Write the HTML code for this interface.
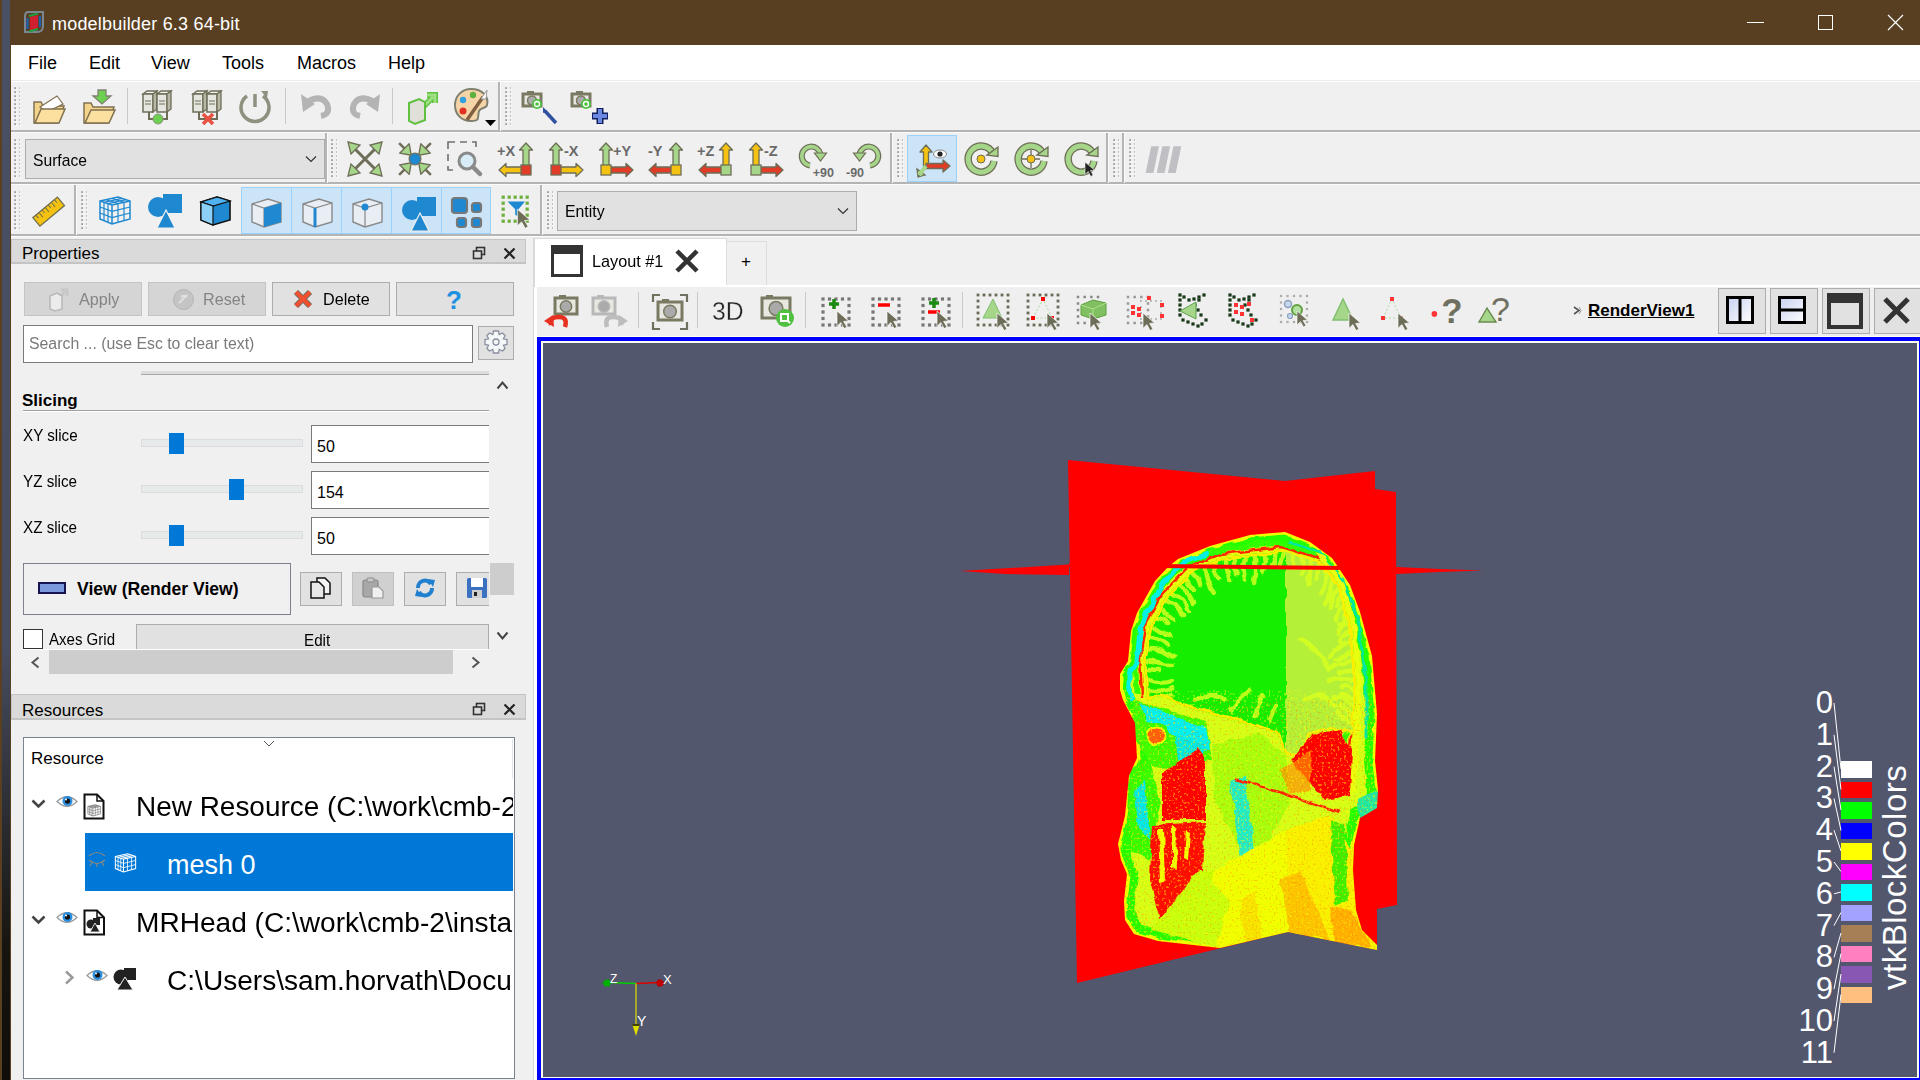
<!DOCTYPE html>
<html><head><meta charset="utf-8">
<style>
*{margin:0;padding:0;box-sizing:border-box}
html,body{width:1920px;height:1080px;overflow:hidden;background:#4b5064;font-family:"Liberation Sans",sans-serif;color:#000}
.a{position:absolute;overflow:visible}
.t{position:absolute;white-space:nowrap;line-height:1}
</style></head><body>

<div class="a" style="left:0px;top:0px;width:2px;height:1080px;background:#5a3f20"></div>
<div class="a" style="left:2px;top:0px;width:8px;height:1080px;background:linear-gradient(#4a5063,#474d60 60%,#15140f 88%,#0e0d0a)"></div>
<div class="a" style="left:10px;top:0px;width:1px;height:1080px;background:#5a3f20"></div>
<div class="a" style="left:11px;top:0px;width:1909px;height:45px;background:#583f21"></div>
<svg class="a" style="left:23px;top:10px" width="22" height="24" viewBox="0 0 22 24"><path d="M4 2 H20 V16 Q20 22 14 22 H2 V6 Q2 2 6 2Z" fill="none" stroke="#7a8790" stroke-width="2"/><path d="M7 7 L15 5 V19 L7 21Z" fill="#d02030"/><path d="M6 6 L15 3.5" stroke="#20a040" stroke-width="2"/><path d="M6 21.5 L15 19" stroke="#20a040" stroke-width="2"/><path d="M4.5 8 V19" stroke="#2060b0" stroke-width="2.2"/><path d="M17 6 V17" stroke="#2060b0" stroke-width="2.2"/></svg>
<div class="t" style="left:52px;top:15px;font-size:18px;color:#fff;letter-spacing:0.2px">modelbuilder 6.3 64-bit</div>
<div class="a" style="left:1747px;top:22px;width:17px;height:1px;background:#fff"></div>
<div class="a" style="left:1818px;top:15px;width:15px;height:15px;border:1px solid #fff"></div>
<svg class="a" style="left:1887px;top:14px" width="17" height="17" viewBox="0 0 17 17"><path d="M1 1 L16 16 M16 1 L1 16" stroke="#fff" stroke-width="1.2"/></svg>
<div class="a" style="left:11px;top:45px;width:1909px;height:35px;background:#fff"></div>
<div class="t" style="left:28px;top:54px;font-size:18px;">File</div>
<div class="t" style="left:89px;top:54px;font-size:18px;">Edit</div>
<div class="t" style="left:151px;top:54px;font-size:18px;">View</div>
<div class="t" style="left:222px;top:54px;font-size:18px;">Tools</div>
<div class="t" style="left:297px;top:54px;font-size:18px;">Macros</div>
<div class="t" style="left:388px;top:54px;font-size:18px;">Help</div>
<div class="a" style="left:11px;top:80px;width:1909px;height:1px;background:#ebebeb"></div>
<div class="a" style="left:11px;top:81px;width:1909px;height:1px;background:#fff"></div>
<div class="a" style="left:11px;top:82px;width:1909px;height:998px;background:#f0f0f0"></div>
<div class="a" style="left:11px;top:130px;width:1909px;height:2px;background:#b4b4b4"></div>
<div class="a" style="left:11px;top:132px;width:1909px;height:1px;background:#fbfbfb"></div>
<div class="a" style="left:11px;top:182px;width:1909px;height:2px;background:#b4b4b4"></div>
<div class="a" style="left:11px;top:184px;width:1909px;height:1px;background:#fbfbfb"></div>
<div class="a" style="left:11px;top:234px;width:1909px;height:2px;background:#b4b4b4"></div>
<div class="a" style="left:11px;top:236px;width:1909px;height:1px;background:#fbfbfb"></div>
<svg class="a" style="left:14px;top:87px" width="8" height="41" viewBox="0 0 8 41"><rect x="0" y="0" width="2" height="2" fill="#b4b4b4"/><rect x="1" y="1" width="1" height="1" fill="#999"/><rect x="2" y="2" width="1" height="1" fill="#fff"/><rect x="5" y="0" width="1" height="2" fill="#c4c4c4"/><rect x="6" y="2" width="1" height="1" fill="#fff"/><rect x="0" y="4" width="2" height="2" fill="#b4b4b4"/><rect x="1" y="5" width="1" height="1" fill="#999"/><rect x="2" y="6" width="1" height="1" fill="#fff"/><rect x="5" y="4" width="1" height="2" fill="#c4c4c4"/><rect x="6" y="6" width="1" height="1" fill="#fff"/><rect x="0" y="8" width="2" height="2" fill="#b4b4b4"/><rect x="1" y="9" width="1" height="1" fill="#999"/><rect x="2" y="10" width="1" height="1" fill="#fff"/><rect x="5" y="8" width="1" height="2" fill="#c4c4c4"/><rect x="6" y="10" width="1" height="1" fill="#fff"/><rect x="0" y="12" width="2" height="2" fill="#b4b4b4"/><rect x="1" y="13" width="1" height="1" fill="#999"/><rect x="2" y="14" width="1" height="1" fill="#fff"/><rect x="5" y="12" width="1" height="2" fill="#c4c4c4"/><rect x="6" y="14" width="1" height="1" fill="#fff"/><rect x="0" y="16" width="2" height="2" fill="#b4b4b4"/><rect x="1" y="17" width="1" height="1" fill="#999"/><rect x="2" y="18" width="1" height="1" fill="#fff"/><rect x="5" y="16" width="1" height="2" fill="#c4c4c4"/><rect x="6" y="18" width="1" height="1" fill="#fff"/><rect x="0" y="20" width="2" height="2" fill="#b4b4b4"/><rect x="1" y="21" width="1" height="1" fill="#999"/><rect x="2" y="22" width="1" height="1" fill="#fff"/><rect x="5" y="20" width="1" height="2" fill="#c4c4c4"/><rect x="6" y="22" width="1" height="1" fill="#fff"/><rect x="0" y="24" width="2" height="2" fill="#b4b4b4"/><rect x="1" y="25" width="1" height="1" fill="#999"/><rect x="2" y="26" width="1" height="1" fill="#fff"/><rect x="5" y="24" width="1" height="2" fill="#c4c4c4"/><rect x="6" y="26" width="1" height="1" fill="#fff"/><rect x="0" y="28" width="2" height="2" fill="#b4b4b4"/><rect x="1" y="29" width="1" height="1" fill="#999"/><rect x="2" y="30" width="1" height="1" fill="#fff"/><rect x="5" y="28" width="1" height="2" fill="#c4c4c4"/><rect x="6" y="30" width="1" height="1" fill="#fff"/><rect x="0" y="32" width="2" height="2" fill="#b4b4b4"/><rect x="1" y="33" width="1" height="1" fill="#999"/><rect x="2" y="34" width="1" height="1" fill="#fff"/><rect x="5" y="32" width="1" height="2" fill="#c4c4c4"/><rect x="6" y="34" width="1" height="1" fill="#fff"/><rect x="0" y="36" width="2" height="2" fill="#b4b4b4"/><rect x="1" y="37" width="1" height="1" fill="#999"/><rect x="2" y="38" width="1" height="1" fill="#fff"/><rect x="5" y="36" width="1" height="2" fill="#c4c4c4"/><rect x="6" y="38" width="1" height="1" fill="#fff"/></svg>
<div class="a" style="left:498px;top:82px;width:2px;height:49px;background:#b4b4b4"></div>
<div class="a" style="left:500px;top:82px;width:1px;height:49px;background:#fbfbfb"></div>
<svg class="a" style="left:505px;top:87px" width="8" height="41" viewBox="0 0 8 41"><rect x="0" y="0" width="2" height="2" fill="#b4b4b4"/><rect x="1" y="1" width="1" height="1" fill="#999"/><rect x="2" y="2" width="1" height="1" fill="#fff"/><rect x="5" y="0" width="1" height="2" fill="#c4c4c4"/><rect x="6" y="2" width="1" height="1" fill="#fff"/><rect x="0" y="4" width="2" height="2" fill="#b4b4b4"/><rect x="1" y="5" width="1" height="1" fill="#999"/><rect x="2" y="6" width="1" height="1" fill="#fff"/><rect x="5" y="4" width="1" height="2" fill="#c4c4c4"/><rect x="6" y="6" width="1" height="1" fill="#fff"/><rect x="0" y="8" width="2" height="2" fill="#b4b4b4"/><rect x="1" y="9" width="1" height="1" fill="#999"/><rect x="2" y="10" width="1" height="1" fill="#fff"/><rect x="5" y="8" width="1" height="2" fill="#c4c4c4"/><rect x="6" y="10" width="1" height="1" fill="#fff"/><rect x="0" y="12" width="2" height="2" fill="#b4b4b4"/><rect x="1" y="13" width="1" height="1" fill="#999"/><rect x="2" y="14" width="1" height="1" fill="#fff"/><rect x="5" y="12" width="1" height="2" fill="#c4c4c4"/><rect x="6" y="14" width="1" height="1" fill="#fff"/><rect x="0" y="16" width="2" height="2" fill="#b4b4b4"/><rect x="1" y="17" width="1" height="1" fill="#999"/><rect x="2" y="18" width="1" height="1" fill="#fff"/><rect x="5" y="16" width="1" height="2" fill="#c4c4c4"/><rect x="6" y="18" width="1" height="1" fill="#fff"/><rect x="0" y="20" width="2" height="2" fill="#b4b4b4"/><rect x="1" y="21" width="1" height="1" fill="#999"/><rect x="2" y="22" width="1" height="1" fill="#fff"/><rect x="5" y="20" width="1" height="2" fill="#c4c4c4"/><rect x="6" y="22" width="1" height="1" fill="#fff"/><rect x="0" y="24" width="2" height="2" fill="#b4b4b4"/><rect x="1" y="25" width="1" height="1" fill="#999"/><rect x="2" y="26" width="1" height="1" fill="#fff"/><rect x="5" y="24" width="1" height="2" fill="#c4c4c4"/><rect x="6" y="26" width="1" height="1" fill="#fff"/><rect x="0" y="28" width="2" height="2" fill="#b4b4b4"/><rect x="1" y="29" width="1" height="1" fill="#999"/><rect x="2" y="30" width="1" height="1" fill="#fff"/><rect x="5" y="28" width="1" height="2" fill="#c4c4c4"/><rect x="6" y="30" width="1" height="1" fill="#fff"/><rect x="0" y="32" width="2" height="2" fill="#b4b4b4"/><rect x="1" y="33" width="1" height="1" fill="#999"/><rect x="2" y="34" width="1" height="1" fill="#fff"/><rect x="5" y="32" width="1" height="2" fill="#c4c4c4"/><rect x="6" y="34" width="1" height="1" fill="#fff"/><rect x="0" y="36" width="2" height="2" fill="#b4b4b4"/><rect x="1" y="37" width="1" height="1" fill="#999"/><rect x="2" y="38" width="1" height="1" fill="#fff"/><rect x="5" y="36" width="1" height="2" fill="#c4c4c4"/><rect x="6" y="38" width="1" height="1" fill="#fff"/></svg>
<svg class="a" style="left:14px;top:139px" width="8" height="42" viewBox="0 0 8 42"><rect x="0" y="0" width="2" height="2" fill="#b4b4b4"/><rect x="1" y="1" width="1" height="1" fill="#999"/><rect x="2" y="2" width="1" height="1" fill="#fff"/><rect x="5" y="0" width="1" height="2" fill="#c4c4c4"/><rect x="6" y="2" width="1" height="1" fill="#fff"/><rect x="0" y="4" width="2" height="2" fill="#b4b4b4"/><rect x="1" y="5" width="1" height="1" fill="#999"/><rect x="2" y="6" width="1" height="1" fill="#fff"/><rect x="5" y="4" width="1" height="2" fill="#c4c4c4"/><rect x="6" y="6" width="1" height="1" fill="#fff"/><rect x="0" y="8" width="2" height="2" fill="#b4b4b4"/><rect x="1" y="9" width="1" height="1" fill="#999"/><rect x="2" y="10" width="1" height="1" fill="#fff"/><rect x="5" y="8" width="1" height="2" fill="#c4c4c4"/><rect x="6" y="10" width="1" height="1" fill="#fff"/><rect x="0" y="12" width="2" height="2" fill="#b4b4b4"/><rect x="1" y="13" width="1" height="1" fill="#999"/><rect x="2" y="14" width="1" height="1" fill="#fff"/><rect x="5" y="12" width="1" height="2" fill="#c4c4c4"/><rect x="6" y="14" width="1" height="1" fill="#fff"/><rect x="0" y="16" width="2" height="2" fill="#b4b4b4"/><rect x="1" y="17" width="1" height="1" fill="#999"/><rect x="2" y="18" width="1" height="1" fill="#fff"/><rect x="5" y="16" width="1" height="2" fill="#c4c4c4"/><rect x="6" y="18" width="1" height="1" fill="#fff"/><rect x="0" y="20" width="2" height="2" fill="#b4b4b4"/><rect x="1" y="21" width="1" height="1" fill="#999"/><rect x="2" y="22" width="1" height="1" fill="#fff"/><rect x="5" y="20" width="1" height="2" fill="#c4c4c4"/><rect x="6" y="22" width="1" height="1" fill="#fff"/><rect x="0" y="24" width="2" height="2" fill="#b4b4b4"/><rect x="1" y="25" width="1" height="1" fill="#999"/><rect x="2" y="26" width="1" height="1" fill="#fff"/><rect x="5" y="24" width="1" height="2" fill="#c4c4c4"/><rect x="6" y="26" width="1" height="1" fill="#fff"/><rect x="0" y="28" width="2" height="2" fill="#b4b4b4"/><rect x="1" y="29" width="1" height="1" fill="#999"/><rect x="2" y="30" width="1" height="1" fill="#fff"/><rect x="5" y="28" width="1" height="2" fill="#c4c4c4"/><rect x="6" y="30" width="1" height="1" fill="#fff"/><rect x="0" y="32" width="2" height="2" fill="#b4b4b4"/><rect x="1" y="33" width="1" height="1" fill="#999"/><rect x="2" y="34" width="1" height="1" fill="#fff"/><rect x="5" y="32" width="1" height="2" fill="#c4c4c4"/><rect x="6" y="34" width="1" height="1" fill="#fff"/><rect x="0" y="36" width="2" height="2" fill="#b4b4b4"/><rect x="1" y="37" width="1" height="1" fill="#999"/><rect x="2" y="38" width="1" height="1" fill="#fff"/><rect x="5" y="36" width="1" height="2" fill="#c4c4c4"/><rect x="6" y="38" width="1" height="1" fill="#fff"/></svg>
<div class="a" style="left:325px;top:133px;width:2px;height:50px;background:#b4b4b4"></div>
<div class="a" style="left:327px;top:133px;width:1px;height:50px;background:#fbfbfb"></div>
<svg class="a" style="left:331px;top:139px" width="8" height="42" viewBox="0 0 8 42"><rect x="0" y="0" width="2" height="2" fill="#b4b4b4"/><rect x="1" y="1" width="1" height="1" fill="#999"/><rect x="2" y="2" width="1" height="1" fill="#fff"/><rect x="5" y="0" width="1" height="2" fill="#c4c4c4"/><rect x="6" y="2" width="1" height="1" fill="#fff"/><rect x="0" y="4" width="2" height="2" fill="#b4b4b4"/><rect x="1" y="5" width="1" height="1" fill="#999"/><rect x="2" y="6" width="1" height="1" fill="#fff"/><rect x="5" y="4" width="1" height="2" fill="#c4c4c4"/><rect x="6" y="6" width="1" height="1" fill="#fff"/><rect x="0" y="8" width="2" height="2" fill="#b4b4b4"/><rect x="1" y="9" width="1" height="1" fill="#999"/><rect x="2" y="10" width="1" height="1" fill="#fff"/><rect x="5" y="8" width="1" height="2" fill="#c4c4c4"/><rect x="6" y="10" width="1" height="1" fill="#fff"/><rect x="0" y="12" width="2" height="2" fill="#b4b4b4"/><rect x="1" y="13" width="1" height="1" fill="#999"/><rect x="2" y="14" width="1" height="1" fill="#fff"/><rect x="5" y="12" width="1" height="2" fill="#c4c4c4"/><rect x="6" y="14" width="1" height="1" fill="#fff"/><rect x="0" y="16" width="2" height="2" fill="#b4b4b4"/><rect x="1" y="17" width="1" height="1" fill="#999"/><rect x="2" y="18" width="1" height="1" fill="#fff"/><rect x="5" y="16" width="1" height="2" fill="#c4c4c4"/><rect x="6" y="18" width="1" height="1" fill="#fff"/><rect x="0" y="20" width="2" height="2" fill="#b4b4b4"/><rect x="1" y="21" width="1" height="1" fill="#999"/><rect x="2" y="22" width="1" height="1" fill="#fff"/><rect x="5" y="20" width="1" height="2" fill="#c4c4c4"/><rect x="6" y="22" width="1" height="1" fill="#fff"/><rect x="0" y="24" width="2" height="2" fill="#b4b4b4"/><rect x="1" y="25" width="1" height="1" fill="#999"/><rect x="2" y="26" width="1" height="1" fill="#fff"/><rect x="5" y="24" width="1" height="2" fill="#c4c4c4"/><rect x="6" y="26" width="1" height="1" fill="#fff"/><rect x="0" y="28" width="2" height="2" fill="#b4b4b4"/><rect x="1" y="29" width="1" height="1" fill="#999"/><rect x="2" y="30" width="1" height="1" fill="#fff"/><rect x="5" y="28" width="1" height="2" fill="#c4c4c4"/><rect x="6" y="30" width="1" height="1" fill="#fff"/><rect x="0" y="32" width="2" height="2" fill="#b4b4b4"/><rect x="1" y="33" width="1" height="1" fill="#999"/><rect x="2" y="34" width="1" height="1" fill="#fff"/><rect x="5" y="32" width="1" height="2" fill="#c4c4c4"/><rect x="6" y="34" width="1" height="1" fill="#fff"/><rect x="0" y="36" width="2" height="2" fill="#b4b4b4"/><rect x="1" y="37" width="1" height="1" fill="#999"/><rect x="2" y="38" width="1" height="1" fill="#fff"/><rect x="5" y="36" width="1" height="2" fill="#c4c4c4"/><rect x="6" y="38" width="1" height="1" fill="#fff"/></svg>
<div class="a" style="left:890px;top:133px;width:2px;height:50px;background:#b4b4b4"></div>
<div class="a" style="left:892px;top:133px;width:1px;height:50px;background:#fbfbfb"></div>
<svg class="a" style="left:897px;top:139px" width="8" height="42" viewBox="0 0 8 42"><rect x="0" y="0" width="2" height="2" fill="#b4b4b4"/><rect x="1" y="1" width="1" height="1" fill="#999"/><rect x="2" y="2" width="1" height="1" fill="#fff"/><rect x="5" y="0" width="1" height="2" fill="#c4c4c4"/><rect x="6" y="2" width="1" height="1" fill="#fff"/><rect x="0" y="4" width="2" height="2" fill="#b4b4b4"/><rect x="1" y="5" width="1" height="1" fill="#999"/><rect x="2" y="6" width="1" height="1" fill="#fff"/><rect x="5" y="4" width="1" height="2" fill="#c4c4c4"/><rect x="6" y="6" width="1" height="1" fill="#fff"/><rect x="0" y="8" width="2" height="2" fill="#b4b4b4"/><rect x="1" y="9" width="1" height="1" fill="#999"/><rect x="2" y="10" width="1" height="1" fill="#fff"/><rect x="5" y="8" width="1" height="2" fill="#c4c4c4"/><rect x="6" y="10" width="1" height="1" fill="#fff"/><rect x="0" y="12" width="2" height="2" fill="#b4b4b4"/><rect x="1" y="13" width="1" height="1" fill="#999"/><rect x="2" y="14" width="1" height="1" fill="#fff"/><rect x="5" y="12" width="1" height="2" fill="#c4c4c4"/><rect x="6" y="14" width="1" height="1" fill="#fff"/><rect x="0" y="16" width="2" height="2" fill="#b4b4b4"/><rect x="1" y="17" width="1" height="1" fill="#999"/><rect x="2" y="18" width="1" height="1" fill="#fff"/><rect x="5" y="16" width="1" height="2" fill="#c4c4c4"/><rect x="6" y="18" width="1" height="1" fill="#fff"/><rect x="0" y="20" width="2" height="2" fill="#b4b4b4"/><rect x="1" y="21" width="1" height="1" fill="#999"/><rect x="2" y="22" width="1" height="1" fill="#fff"/><rect x="5" y="20" width="1" height="2" fill="#c4c4c4"/><rect x="6" y="22" width="1" height="1" fill="#fff"/><rect x="0" y="24" width="2" height="2" fill="#b4b4b4"/><rect x="1" y="25" width="1" height="1" fill="#999"/><rect x="2" y="26" width="1" height="1" fill="#fff"/><rect x="5" y="24" width="1" height="2" fill="#c4c4c4"/><rect x="6" y="26" width="1" height="1" fill="#fff"/><rect x="0" y="28" width="2" height="2" fill="#b4b4b4"/><rect x="1" y="29" width="1" height="1" fill="#999"/><rect x="2" y="30" width="1" height="1" fill="#fff"/><rect x="5" y="28" width="1" height="2" fill="#c4c4c4"/><rect x="6" y="30" width="1" height="1" fill="#fff"/><rect x="0" y="32" width="2" height="2" fill="#b4b4b4"/><rect x="1" y="33" width="1" height="1" fill="#999"/><rect x="2" y="34" width="1" height="1" fill="#fff"/><rect x="5" y="32" width="1" height="2" fill="#c4c4c4"/><rect x="6" y="34" width="1" height="1" fill="#fff"/><rect x="0" y="36" width="2" height="2" fill="#b4b4b4"/><rect x="1" y="37" width="1" height="1" fill="#999"/><rect x="2" y="38" width="1" height="1" fill="#fff"/><rect x="5" y="36" width="1" height="2" fill="#c4c4c4"/><rect x="6" y="38" width="1" height="1" fill="#fff"/></svg>
<div class="a" style="left:1106px;top:133px;width:2px;height:50px;background:#b4b4b4"></div>
<div class="a" style="left:1108px;top:133px;width:1px;height:50px;background:#fbfbfb"></div>
<svg class="a" style="left:1113px;top:139px" width="8" height="42" viewBox="0 0 8 42"><rect x="0" y="0" width="2" height="2" fill="#b4b4b4"/><rect x="1" y="1" width="1" height="1" fill="#999"/><rect x="2" y="2" width="1" height="1" fill="#fff"/><rect x="5" y="0" width="1" height="2" fill="#c4c4c4"/><rect x="6" y="2" width="1" height="1" fill="#fff"/><rect x="0" y="4" width="2" height="2" fill="#b4b4b4"/><rect x="1" y="5" width="1" height="1" fill="#999"/><rect x="2" y="6" width="1" height="1" fill="#fff"/><rect x="5" y="4" width="1" height="2" fill="#c4c4c4"/><rect x="6" y="6" width="1" height="1" fill="#fff"/><rect x="0" y="8" width="2" height="2" fill="#b4b4b4"/><rect x="1" y="9" width="1" height="1" fill="#999"/><rect x="2" y="10" width="1" height="1" fill="#fff"/><rect x="5" y="8" width="1" height="2" fill="#c4c4c4"/><rect x="6" y="10" width="1" height="1" fill="#fff"/><rect x="0" y="12" width="2" height="2" fill="#b4b4b4"/><rect x="1" y="13" width="1" height="1" fill="#999"/><rect x="2" y="14" width="1" height="1" fill="#fff"/><rect x="5" y="12" width="1" height="2" fill="#c4c4c4"/><rect x="6" y="14" width="1" height="1" fill="#fff"/><rect x="0" y="16" width="2" height="2" fill="#b4b4b4"/><rect x="1" y="17" width="1" height="1" fill="#999"/><rect x="2" y="18" width="1" height="1" fill="#fff"/><rect x="5" y="16" width="1" height="2" fill="#c4c4c4"/><rect x="6" y="18" width="1" height="1" fill="#fff"/><rect x="0" y="20" width="2" height="2" fill="#b4b4b4"/><rect x="1" y="21" width="1" height="1" fill="#999"/><rect x="2" y="22" width="1" height="1" fill="#fff"/><rect x="5" y="20" width="1" height="2" fill="#c4c4c4"/><rect x="6" y="22" width="1" height="1" fill="#fff"/><rect x="0" y="24" width="2" height="2" fill="#b4b4b4"/><rect x="1" y="25" width="1" height="1" fill="#999"/><rect x="2" y="26" width="1" height="1" fill="#fff"/><rect x="5" y="24" width="1" height="2" fill="#c4c4c4"/><rect x="6" y="26" width="1" height="1" fill="#fff"/><rect x="0" y="28" width="2" height="2" fill="#b4b4b4"/><rect x="1" y="29" width="1" height="1" fill="#999"/><rect x="2" y="30" width="1" height="1" fill="#fff"/><rect x="5" y="28" width="1" height="2" fill="#c4c4c4"/><rect x="6" y="30" width="1" height="1" fill="#fff"/><rect x="0" y="32" width="2" height="2" fill="#b4b4b4"/><rect x="1" y="33" width="1" height="1" fill="#999"/><rect x="2" y="34" width="1" height="1" fill="#fff"/><rect x="5" y="32" width="1" height="2" fill="#c4c4c4"/><rect x="6" y="34" width="1" height="1" fill="#fff"/><rect x="0" y="36" width="2" height="2" fill="#b4b4b4"/><rect x="1" y="37" width="1" height="1" fill="#999"/><rect x="2" y="38" width="1" height="1" fill="#fff"/><rect x="5" y="36" width="1" height="2" fill="#c4c4c4"/><rect x="6" y="38" width="1" height="1" fill="#fff"/></svg>
<div class="a" style="left:1122px;top:133px;width:2px;height:50px;background:#b4b4b4"></div>
<div class="a" style="left:1124px;top:133px;width:1px;height:50px;background:#fbfbfb"></div>
<svg class="a" style="left:1129px;top:139px" width="8" height="42" viewBox="0 0 8 42"><rect x="0" y="0" width="2" height="2" fill="#b4b4b4"/><rect x="1" y="1" width="1" height="1" fill="#999"/><rect x="2" y="2" width="1" height="1" fill="#fff"/><rect x="5" y="0" width="1" height="2" fill="#c4c4c4"/><rect x="6" y="2" width="1" height="1" fill="#fff"/><rect x="0" y="4" width="2" height="2" fill="#b4b4b4"/><rect x="1" y="5" width="1" height="1" fill="#999"/><rect x="2" y="6" width="1" height="1" fill="#fff"/><rect x="5" y="4" width="1" height="2" fill="#c4c4c4"/><rect x="6" y="6" width="1" height="1" fill="#fff"/><rect x="0" y="8" width="2" height="2" fill="#b4b4b4"/><rect x="1" y="9" width="1" height="1" fill="#999"/><rect x="2" y="10" width="1" height="1" fill="#fff"/><rect x="5" y="8" width="1" height="2" fill="#c4c4c4"/><rect x="6" y="10" width="1" height="1" fill="#fff"/><rect x="0" y="12" width="2" height="2" fill="#b4b4b4"/><rect x="1" y="13" width="1" height="1" fill="#999"/><rect x="2" y="14" width="1" height="1" fill="#fff"/><rect x="5" y="12" width="1" height="2" fill="#c4c4c4"/><rect x="6" y="14" width="1" height="1" fill="#fff"/><rect x="0" y="16" width="2" height="2" fill="#b4b4b4"/><rect x="1" y="17" width="1" height="1" fill="#999"/><rect x="2" y="18" width="1" height="1" fill="#fff"/><rect x="5" y="16" width="1" height="2" fill="#c4c4c4"/><rect x="6" y="18" width="1" height="1" fill="#fff"/><rect x="0" y="20" width="2" height="2" fill="#b4b4b4"/><rect x="1" y="21" width="1" height="1" fill="#999"/><rect x="2" y="22" width="1" height="1" fill="#fff"/><rect x="5" y="20" width="1" height="2" fill="#c4c4c4"/><rect x="6" y="22" width="1" height="1" fill="#fff"/><rect x="0" y="24" width="2" height="2" fill="#b4b4b4"/><rect x="1" y="25" width="1" height="1" fill="#999"/><rect x="2" y="26" width="1" height="1" fill="#fff"/><rect x="5" y="24" width="1" height="2" fill="#c4c4c4"/><rect x="6" y="26" width="1" height="1" fill="#fff"/><rect x="0" y="28" width="2" height="2" fill="#b4b4b4"/><rect x="1" y="29" width="1" height="1" fill="#999"/><rect x="2" y="30" width="1" height="1" fill="#fff"/><rect x="5" y="28" width="1" height="2" fill="#c4c4c4"/><rect x="6" y="30" width="1" height="1" fill="#fff"/><rect x="0" y="32" width="2" height="2" fill="#b4b4b4"/><rect x="1" y="33" width="1" height="1" fill="#999"/><rect x="2" y="34" width="1" height="1" fill="#fff"/><rect x="5" y="32" width="1" height="2" fill="#c4c4c4"/><rect x="6" y="34" width="1" height="1" fill="#fff"/><rect x="0" y="36" width="2" height="2" fill="#b4b4b4"/><rect x="1" y="37" width="1" height="1" fill="#999"/><rect x="2" y="38" width="1" height="1" fill="#fff"/><rect x="5" y="36" width="1" height="2" fill="#c4c4c4"/><rect x="6" y="38" width="1" height="1" fill="#fff"/></svg>
<svg class="a" style="left:14px;top:191px" width="8" height="42" viewBox="0 0 8 42"><rect x="0" y="0" width="2" height="2" fill="#b4b4b4"/><rect x="1" y="1" width="1" height="1" fill="#999"/><rect x="2" y="2" width="1" height="1" fill="#fff"/><rect x="5" y="0" width="1" height="2" fill="#c4c4c4"/><rect x="6" y="2" width="1" height="1" fill="#fff"/><rect x="0" y="4" width="2" height="2" fill="#b4b4b4"/><rect x="1" y="5" width="1" height="1" fill="#999"/><rect x="2" y="6" width="1" height="1" fill="#fff"/><rect x="5" y="4" width="1" height="2" fill="#c4c4c4"/><rect x="6" y="6" width="1" height="1" fill="#fff"/><rect x="0" y="8" width="2" height="2" fill="#b4b4b4"/><rect x="1" y="9" width="1" height="1" fill="#999"/><rect x="2" y="10" width="1" height="1" fill="#fff"/><rect x="5" y="8" width="1" height="2" fill="#c4c4c4"/><rect x="6" y="10" width="1" height="1" fill="#fff"/><rect x="0" y="12" width="2" height="2" fill="#b4b4b4"/><rect x="1" y="13" width="1" height="1" fill="#999"/><rect x="2" y="14" width="1" height="1" fill="#fff"/><rect x="5" y="12" width="1" height="2" fill="#c4c4c4"/><rect x="6" y="14" width="1" height="1" fill="#fff"/><rect x="0" y="16" width="2" height="2" fill="#b4b4b4"/><rect x="1" y="17" width="1" height="1" fill="#999"/><rect x="2" y="18" width="1" height="1" fill="#fff"/><rect x="5" y="16" width="1" height="2" fill="#c4c4c4"/><rect x="6" y="18" width="1" height="1" fill="#fff"/><rect x="0" y="20" width="2" height="2" fill="#b4b4b4"/><rect x="1" y="21" width="1" height="1" fill="#999"/><rect x="2" y="22" width="1" height="1" fill="#fff"/><rect x="5" y="20" width="1" height="2" fill="#c4c4c4"/><rect x="6" y="22" width="1" height="1" fill="#fff"/><rect x="0" y="24" width="2" height="2" fill="#b4b4b4"/><rect x="1" y="25" width="1" height="1" fill="#999"/><rect x="2" y="26" width="1" height="1" fill="#fff"/><rect x="5" y="24" width="1" height="2" fill="#c4c4c4"/><rect x="6" y="26" width="1" height="1" fill="#fff"/><rect x="0" y="28" width="2" height="2" fill="#b4b4b4"/><rect x="1" y="29" width="1" height="1" fill="#999"/><rect x="2" y="30" width="1" height="1" fill="#fff"/><rect x="5" y="28" width="1" height="2" fill="#c4c4c4"/><rect x="6" y="30" width="1" height="1" fill="#fff"/><rect x="0" y="32" width="2" height="2" fill="#b4b4b4"/><rect x="1" y="33" width="1" height="1" fill="#999"/><rect x="2" y="34" width="1" height="1" fill="#fff"/><rect x="5" y="32" width="1" height="2" fill="#c4c4c4"/><rect x="6" y="34" width="1" height="1" fill="#fff"/><rect x="0" y="36" width="2" height="2" fill="#b4b4b4"/><rect x="1" y="37" width="1" height="1" fill="#999"/><rect x="2" y="38" width="1" height="1" fill="#fff"/><rect x="5" y="36" width="1" height="2" fill="#c4c4c4"/><rect x="6" y="38" width="1" height="1" fill="#fff"/></svg>
<div class="a" style="left:74px;top:185px;width:2px;height:50px;background:#b4b4b4"></div>
<div class="a" style="left:76px;top:185px;width:1px;height:50px;background:#fbfbfb"></div>
<svg class="a" style="left:81px;top:191px" width="8" height="42" viewBox="0 0 8 42"><rect x="0" y="0" width="2" height="2" fill="#b4b4b4"/><rect x="1" y="1" width="1" height="1" fill="#999"/><rect x="2" y="2" width="1" height="1" fill="#fff"/><rect x="5" y="0" width="1" height="2" fill="#c4c4c4"/><rect x="6" y="2" width="1" height="1" fill="#fff"/><rect x="0" y="4" width="2" height="2" fill="#b4b4b4"/><rect x="1" y="5" width="1" height="1" fill="#999"/><rect x="2" y="6" width="1" height="1" fill="#fff"/><rect x="5" y="4" width="1" height="2" fill="#c4c4c4"/><rect x="6" y="6" width="1" height="1" fill="#fff"/><rect x="0" y="8" width="2" height="2" fill="#b4b4b4"/><rect x="1" y="9" width="1" height="1" fill="#999"/><rect x="2" y="10" width="1" height="1" fill="#fff"/><rect x="5" y="8" width="1" height="2" fill="#c4c4c4"/><rect x="6" y="10" width="1" height="1" fill="#fff"/><rect x="0" y="12" width="2" height="2" fill="#b4b4b4"/><rect x="1" y="13" width="1" height="1" fill="#999"/><rect x="2" y="14" width="1" height="1" fill="#fff"/><rect x="5" y="12" width="1" height="2" fill="#c4c4c4"/><rect x="6" y="14" width="1" height="1" fill="#fff"/><rect x="0" y="16" width="2" height="2" fill="#b4b4b4"/><rect x="1" y="17" width="1" height="1" fill="#999"/><rect x="2" y="18" width="1" height="1" fill="#fff"/><rect x="5" y="16" width="1" height="2" fill="#c4c4c4"/><rect x="6" y="18" width="1" height="1" fill="#fff"/><rect x="0" y="20" width="2" height="2" fill="#b4b4b4"/><rect x="1" y="21" width="1" height="1" fill="#999"/><rect x="2" y="22" width="1" height="1" fill="#fff"/><rect x="5" y="20" width="1" height="2" fill="#c4c4c4"/><rect x="6" y="22" width="1" height="1" fill="#fff"/><rect x="0" y="24" width="2" height="2" fill="#b4b4b4"/><rect x="1" y="25" width="1" height="1" fill="#999"/><rect x="2" y="26" width="1" height="1" fill="#fff"/><rect x="5" y="24" width="1" height="2" fill="#c4c4c4"/><rect x="6" y="26" width="1" height="1" fill="#fff"/><rect x="0" y="28" width="2" height="2" fill="#b4b4b4"/><rect x="1" y="29" width="1" height="1" fill="#999"/><rect x="2" y="30" width="1" height="1" fill="#fff"/><rect x="5" y="28" width="1" height="2" fill="#c4c4c4"/><rect x="6" y="30" width="1" height="1" fill="#fff"/><rect x="0" y="32" width="2" height="2" fill="#b4b4b4"/><rect x="1" y="33" width="1" height="1" fill="#999"/><rect x="2" y="34" width="1" height="1" fill="#fff"/><rect x="5" y="32" width="1" height="2" fill="#c4c4c4"/><rect x="6" y="34" width="1" height="1" fill="#fff"/><rect x="0" y="36" width="2" height="2" fill="#b4b4b4"/><rect x="1" y="37" width="1" height="1" fill="#999"/><rect x="2" y="38" width="1" height="1" fill="#fff"/><rect x="5" y="36" width="1" height="2" fill="#c4c4c4"/><rect x="6" y="38" width="1" height="1" fill="#fff"/></svg>
<div class="a" style="left:540px;top:185px;width:2px;height:50px;background:#b4b4b4"></div>
<div class="a" style="left:542px;top:185px;width:1px;height:50px;background:#fbfbfb"></div>
<svg class="a" style="left:547px;top:191px" width="8" height="42" viewBox="0 0 8 42"><rect x="0" y="0" width="2" height="2" fill="#b4b4b4"/><rect x="1" y="1" width="1" height="1" fill="#999"/><rect x="2" y="2" width="1" height="1" fill="#fff"/><rect x="5" y="0" width="1" height="2" fill="#c4c4c4"/><rect x="6" y="2" width="1" height="1" fill="#fff"/><rect x="0" y="4" width="2" height="2" fill="#b4b4b4"/><rect x="1" y="5" width="1" height="1" fill="#999"/><rect x="2" y="6" width="1" height="1" fill="#fff"/><rect x="5" y="4" width="1" height="2" fill="#c4c4c4"/><rect x="6" y="6" width="1" height="1" fill="#fff"/><rect x="0" y="8" width="2" height="2" fill="#b4b4b4"/><rect x="1" y="9" width="1" height="1" fill="#999"/><rect x="2" y="10" width="1" height="1" fill="#fff"/><rect x="5" y="8" width="1" height="2" fill="#c4c4c4"/><rect x="6" y="10" width="1" height="1" fill="#fff"/><rect x="0" y="12" width="2" height="2" fill="#b4b4b4"/><rect x="1" y="13" width="1" height="1" fill="#999"/><rect x="2" y="14" width="1" height="1" fill="#fff"/><rect x="5" y="12" width="1" height="2" fill="#c4c4c4"/><rect x="6" y="14" width="1" height="1" fill="#fff"/><rect x="0" y="16" width="2" height="2" fill="#b4b4b4"/><rect x="1" y="17" width="1" height="1" fill="#999"/><rect x="2" y="18" width="1" height="1" fill="#fff"/><rect x="5" y="16" width="1" height="2" fill="#c4c4c4"/><rect x="6" y="18" width="1" height="1" fill="#fff"/><rect x="0" y="20" width="2" height="2" fill="#b4b4b4"/><rect x="1" y="21" width="1" height="1" fill="#999"/><rect x="2" y="22" width="1" height="1" fill="#fff"/><rect x="5" y="20" width="1" height="2" fill="#c4c4c4"/><rect x="6" y="22" width="1" height="1" fill="#fff"/><rect x="0" y="24" width="2" height="2" fill="#b4b4b4"/><rect x="1" y="25" width="1" height="1" fill="#999"/><rect x="2" y="26" width="1" height="1" fill="#fff"/><rect x="5" y="24" width="1" height="2" fill="#c4c4c4"/><rect x="6" y="26" width="1" height="1" fill="#fff"/><rect x="0" y="28" width="2" height="2" fill="#b4b4b4"/><rect x="1" y="29" width="1" height="1" fill="#999"/><rect x="2" y="30" width="1" height="1" fill="#fff"/><rect x="5" y="28" width="1" height="2" fill="#c4c4c4"/><rect x="6" y="30" width="1" height="1" fill="#fff"/><rect x="0" y="32" width="2" height="2" fill="#b4b4b4"/><rect x="1" y="33" width="1" height="1" fill="#999"/><rect x="2" y="34" width="1" height="1" fill="#fff"/><rect x="5" y="32" width="1" height="2" fill="#c4c4c4"/><rect x="6" y="34" width="1" height="1" fill="#fff"/><rect x="0" y="36" width="2" height="2" fill="#b4b4b4"/><rect x="1" y="37" width="1" height="1" fill="#999"/><rect x="2" y="38" width="1" height="1" fill="#fff"/><rect x="5" y="36" width="1" height="2" fill="#c4c4c4"/><rect x="6" y="38" width="1" height="1" fill="#fff"/></svg>
<div class="a" style="left:127px;top:88px;width:1px;height:36px;background:#c8c8c8"></div>
<div class="a" style="left:285px;top:88px;width:1px;height:36px;background:#c8c8c8"></div>
<div class="a" style="left:392px;top:88px;width:1px;height:36px;background:#c8c8c8"></div>
<div class="a" style="left:25px;top:139px;width:300px;height:40px;background:#e1e1e1;border:1px solid #adadad"></div>
<div class="t" style="left:33px;top:152px;font-size:17px;transform:scaleX(0.92);transform-origin:0 0;">Surface</div>
<svg class="a" style="left:305px;top:155px" width="12" height="8" viewBox="0 0 12 8"><path d="M1 1.5 L6 6.5 L11 1.5" fill="none" stroke="#333" stroke-width="1.2"/></svg>
<div class="a" style="left:557px;top:191px;width:300px;height:40px;background:#e1e1e1;border:1px solid #adadad"></div>
<div class="t" style="left:565px;top:203px;font-size:17px;transform:scaleX(0.93);transform-origin:0 0;">Entity</div>
<svg class="a" style="left:837px;top:207px" width="12" height="8" viewBox="0 0 12 8"><path d="M1 1.5 L6 6.5 L11 1.5" fill="none" stroke="#333" stroke-width="1.2"/></svg>
<div class="a" style="left:11px;top:239px;width:515px;height:25px;background:#dadada;border:1px solid #c4c4c4;border-bottom:2px solid #c4c4c4"></div>
<div class="t" style="left:22px;top:245px;font-size:17px;">Properties</div>
<svg class="a" style="left:472px;top:246px" width="14" height="14" viewBox="0 0 14 14"><rect x="4.5" y="1.5" width="8" height="7" fill="none" stroke="#333" stroke-width="1.6"/><rect x="1.5" y="5" width="8" height="7.5" fill="#dadada" stroke="#333" stroke-width="1.6"/></svg>
<svg class="a" style="left:503px;top:247px" width="13" height="13" viewBox="0 0 13 13"><path d="M1.5 1.5 L11.5 11.5 M11.5 1.5 L1.5 11.5" stroke="#222" stroke-width="2.2"/></svg>
<div class="a" style="left:24px;top:282px;width:118px;height:34px;background:#d5d5d5;border:1px solid #c4c4c4"></div>
<div class="a" style="left:148px;top:282px;width:118px;height:34px;background:#d5d5d5;border:1px solid #c4c4c4"></div>
<div class="a" style="left:272px;top:282px;width:118px;height:34px;background:#e1e1e1;border:1px solid #adadad"></div>
<div class="a" style="left:396px;top:282px;width:118px;height:34px;background:#e1e1e1;border:1px solid #adadad"></div>
<div class="t" style="left:79px;top:291px;font-size:17px;transform:scaleX(0.95);transform-origin:0 0;color:#848484">Apply</div>
<div class="t" style="left:203px;top:291px;font-size:17px;transform:scaleX(0.95);transform-origin:0 0;color:#848484">Reset</div>
<div class="t" style="left:323px;top:291px;font-size:17px;transform:scaleX(0.95);transform-origin:0 0;">Delete</div>
<div class="a" style="left:23px;top:325px;width:450px;height:38px;background:#fff;border:1px solid #7a7a7a"></div>
<div class="t" style="left:29px;top:336px;font-size:16px;transform:scaleX(0.99);transform-origin:0 0;color:#7a7a7a">Search ... (use Esc to clear text)</div>
<div class="a" style="left:478px;top:326px;width:36px;height:34px;background:#e1e1e1;border:1px solid #adadad"></div>
<div class="a" style="left:141px;top:371px;width:348px;height:4px;background:#dcdcdc;border-bottom:1px solid #a8a8a8"></div>
<svg class="a" style="left:496px;top:380px" width="13" height="10" viewBox="0 0 13 10"><path d="M1.5 8.5 L6.5 2.5 L11.5 8.5" fill="none" stroke="#444" stroke-width="2"/></svg>
<svg class="a" style="left:496px;top:631px" width="13" height="10" viewBox="0 0 13 10"><path d="M1.5 1.5 L6.5 7.5 L11.5 1.5" fill="none" stroke="#444" stroke-width="2"/></svg>
<div class="a" style="left:490px;top:563px;width:24px;height:32px;background:#cdcdcd"></div>
<div class="t" style="left:22px;top:392px;font-size:17px;font-weight:bold">Slicing</div>
<div class="a" style="left:23px;top:410px;width:466px;height:1px;background:#a0a0a0"></div>
<div class="a" style="left:23px;top:411px;width:466px;height:1px;background:#fff"></div>
<div class="t" style="left:23px;top:428px;font-size:16px;transform:scaleX(0.95);transform-origin:0 0;">XY slice</div>
<div class="a" style="left:141px;top:439px;width:162px;height:8px;background:#e7eaea;border:1px solid #dcdcdc"></div>
<div class="a" style="left:169px;top:433px;width:15px;height:21px;background:#0078d7"></div>
<div class="a" style="left:311px;top:425px;width:190px;height:38px;background:#fff;border:1px solid #7a7a7a"></div>
<div class="t" style="left:317px;top:439px;font-size:16px;transform:scaleX(1.0);transform-origin:0 0;">50</div>
<div class="t" style="left:23px;top:474px;font-size:16px;transform:scaleX(0.95);transform-origin:0 0;">YZ slice</div>
<div class="a" style="left:141px;top:485px;width:162px;height:8px;background:#e7eaea;border:1px solid #dcdcdc"></div>
<div class="a" style="left:229px;top:479px;width:15px;height:21px;background:#0078d7"></div>
<div class="a" style="left:311px;top:471px;width:190px;height:38px;background:#fff;border:1px solid #7a7a7a"></div>
<div class="t" style="left:317px;top:485px;font-size:16px;transform:scaleX(1.0);transform-origin:0 0;">154</div>
<div class="t" style="left:23px;top:520px;font-size:16px;transform:scaleX(0.95);transform-origin:0 0;">XZ slice</div>
<div class="a" style="left:141px;top:531px;width:162px;height:8px;background:#e7eaea;border:1px solid #dcdcdc"></div>
<div class="a" style="left:169px;top:525px;width:15px;height:21px;background:#0078d7"></div>
<div class="a" style="left:311px;top:517px;width:190px;height:38px;background:#fff;border:1px solid #7a7a7a"></div>
<div class="t" style="left:317px;top:531px;font-size:16px;transform:scaleX(1.0);transform-origin:0 0;">50</div>
<div class="a" style="left:489px;top:420px;width:37px;height:140px;background:#f0f0f0"></div>
<div class="a" style="left:23px;top:563px;width:268px;height:52px;background:#f0f0f0;border:1px solid #7c818c"></div>
<svg class="a" style="left:38px;top:582px" width="28" height="12" viewBox="0 0 28 12"><rect x="1" y="1" width="26" height="10" fill="#7c98dc" stroke="#141450" stroke-width="2"/></svg>
<div class="t" style="left:77px;top:581px;font-size:17.6px;font-weight:bold">View (Render View)</div>
<div class="a" style="left:300px;top:572px;width:42px;height:34px;background:#e1e1e1;border:1px solid #adadad"></div>
<div class="a" style="left:352px;top:572px;width:42px;height:34px;background:#d0d0d0;border:1px solid #c0c0c0"></div>
<div class="a" style="left:404px;top:572px;width:42px;height:34px;background:#e1e1e1;border:1px solid #adadad"></div>
<div class="a" style="left:456px;top:572px;width:42px;height:34px;background:#e1e1e1;border:1px solid #adadad"></div>
<div class="a" style="left:489px;top:570px;width:37px;height:40px;background:#f0f0f0"></div>
<div class="a" style="left:489px;top:565px;width:1px;height:50px;background:#f0f0f0"></div>
<div class="a" style="left:490px;top:563px;width:24px;height:32px;background:#cdcdcd"></div>
<div class="a" style="left:23px;top:629px;width:20px;height:20px;background:#fff;border:1px solid #333"></div>
<div class="t" style="left:49px;top:632px;font-size:16px;transform:scaleX(0.94);transform-origin:0 0;">Axes Grid</div>
<div class="a" style="left:136px;top:624px;width:353px;height:25px;background:#e1e1e1;border:1px solid #adadad;border-bottom:none"></div>
<div class="t" style="left:304px;top:633px;font-size:16px;transform:scaleX(0.95);transform-origin:0 0;">Edit</div>
<div class="a" style="left:23px;top:649px;width:466px;height:1px;background:#fff"></div>
<div class="a" style="left:49px;top:650px;width:404px;height:24px;background:#cdcdcd"></div>
<svg class="a" style="left:30px;top:656px" width="11" height="13" viewBox="0 0 11 13"><path d="M8.5 1.5 L2.5 6.5 L8.5 11.5" fill="none" stroke="#555" stroke-width="2"/></svg>
<svg class="a" style="left:470px;top:656px" width="11" height="13" viewBox="0 0 11 13"><path d="M2.5 1.5 L8.5 6.5 L2.5 11.5" fill="none" stroke="#555" stroke-width="2"/></svg>
<div class="a" style="left:11px;top:694px;width:515px;height:26px;background:#dadada;border:1px solid #c4c4c4;border-bottom:2px solid #c4c4c4"></div>
<div class="t" style="left:22px;top:702px;font-size:17px;">Resources</div>
<svg class="a" style="left:472px;top:702px" width="14" height="14" viewBox="0 0 14 14"><rect x="4.5" y="1.5" width="8" height="7" fill="none" stroke="#333" stroke-width="1.6"/><rect x="1.5" y="5" width="8" height="7.5" fill="#dadada" stroke="#333" stroke-width="1.6"/></svg>
<svg class="a" style="left:503px;top:703px" width="13" height="13" viewBox="0 0 13 13"><path d="M1.5 1.5 L11.5 11.5 M11.5 1.5 L1.5 11.5" stroke="#222" stroke-width="2.2"/></svg>
<div class="a" style="left:23px;top:737px;width:492px;height:342px;background:#fff;border:1px solid #7a8290"></div>
<div class="a" style="left:512px;top:739px;width:1px;height:40px;background:#e6e6e6"></div>
<div class="t" style="left:31px;top:750px;font-size:17px;">Resource</div>
<svg class="a" style="left:263px;top:740px" width="12" height="7" viewBox="0 0 12 7"><path d="M1 1 L6 6 L11 1" fill="none" stroke="#555" stroke-width="1"/></svg>
<div class="a" style="left:85px;top:833px;width:428px;height:58px;background:#0078d7"></div>
<div class="a" style="left:24px;top:738px;width:489px;height:340px;overflow:hidden">
<div class="t" style="left:112px;top:56px;font-size:27px;transform:scaleX(1.035);transform-origin:0 0;">New Resource (C:\work\cmb-2\install</div>
<div class="t" style="left:143px;top:114px;font-size:27px;transform:scaleX(1.0);transform-origin:0 0;color:#fff">mesh 0</div>
<div class="t" style="left:112px;top:172px;font-size:27px;transform:scaleX(1.04);transform-origin:0 0;">MRHead (C:\work\cmb-2\install\data</div>
<div class="t" style="left:143px;top:230px;font-size:27px;transform:scaleX(1.04);transform-origin:0 0;">C:\Users\sam.horvath\Documents</div>
</div>
<div class="a" style="left:533px;top:238px;width:1px;height:842px;background:#d8d8d8"></div>
<div class="a" style="left:534px;top:238px;width:3px;height:842px;background:#fff"></div>
<div class="a" style="left:534px;top:238px;width:193px;height:49px;background:#fff;border:1px solid #d9d9d9;border-bottom:none"></div>
<div class="a" style="left:726px;top:241px;width:41px;height:44px;background:#f0f0f0;border:1px solid #dcdcdc;border-bottom:none"></div>
<div class="a" style="left:537px;top:285px;width:1383px;height:2px;background:#fff"></div>
<svg class="a" style="left:551px;top:245px" width="32" height="32" viewBox="0 0 32 32"><rect x="1.5" y="1.5" width="29" height="29" fill="#fff" stroke="#333" stroke-width="3"/><rect x="0" y="0" width="32" height="9" fill="#333"/></svg>
<div class="t" style="left:592px;top:253px;font-size:17px;transform:scaleX(0.955);transform-origin:0 0;">Layout #1</div>
<svg class="a" style="left:674px;top:248px" width="26" height="26" viewBox="0 0 26 26"><path d="M3 3 L23 23 M23 3 L3 23" stroke="#333" stroke-width="4.5"/></svg>
<div class="t" style="left:741px;top:253px;font-size:17px;">+</div>
<div class="a" style="left:537px;top:287px;width:1383px;height:50px;background:#efefef"></div>
<div class="a" style="left:638px;top:292px;width:1px;height:36px;background:#c8c8c8"></div>
<div class="a" style="left:697px;top:292px;width:1px;height:36px;background:#c8c8c8"></div>
<div class="a" style="left:805px;top:292px;width:1px;height:36px;background:#c8c8c8"></div>
<div class="a" style="left:962px;top:292px;width:1px;height:36px;background:#c8c8c8"></div>
<div class="t" style="left:1588px;top:302px;font-size:17px;font-weight:bold;text-decoration:underline">RenderView1</div>
<div class="a" style="left:1718px;top:288px;width:48px;height:46px;background:#e1e1e1;border:1px solid #adadad"></div>
<div class="a" style="left:1770px;top:288px;width:48px;height:46px;background:#e1e1e1;border:1px solid #adadad"></div>
<div class="a" style="left:1822px;top:288px;width:48px;height:46px;background:#e1e1e1;border:1px solid #adadad"></div>
<div class="a" style="left:1874px;top:288px;width:48px;height:46px;background:#e1e1e1;border:1px solid #adadad"></div>
<svg class="a" style="left:1726px;top:296px" width="28" height="28" viewBox="0 0 28 28"><defs><linearGradient id="g1" x1="0" y1="0" x2="1" y2="1"><stop offset="0" stop-color="#c8d0f0"/><stop offset="1" stop-color="#fff"/></linearGradient></defs><rect x="1.5" y="1.5" width="25" height="25" fill="url(#g1)" stroke="#000" stroke-width="3"/><rect x="12.5" y="1" width="3" height="26" fill="#000"/></svg>
<svg class="a" style="left:1778px;top:296px" width="28" height="28" viewBox="0 0 28 28"><rect x="1.5" y="1.5" width="25" height="25" fill="url(#g1)" stroke="#000" stroke-width="3"/><rect x="1" y="12.5" width="26" height="3" fill="#000"/></svg>
<svg class="a" style="left:1827px;top:293px" width="36" height="36" viewBox="0 0 36 36"><rect x="2" y="2" width="32" height="32" fill="none" stroke="#333" stroke-width="4"/><rect x="0" y="0" width="36" height="10" fill="#333"/></svg>
<svg class="a" style="left:1882px;top:296px" width="29" height="29" viewBox="0 0 29 29"><path d="M3 3 L26 26 M26 3 L3 26" stroke="#333" stroke-width="5"/></svg>
<div class="a" style="left:537px;top:336px;width:1383px;height:1px;background:#fffff0"></div>
<div class="a" style="left:537px;top:337px;width:1383px;height:743px;background:#0000ff"></div>
<div class="a" style="left:541px;top:341px;width:1378px;height:737px;background:#fffff0"></div>
<div class="a" style="left:543px;top:343px;width:1374px;height:734px;background:#52576e"></div>
<div class="a" style="left:907px;top:135px;width:50px;height:47px;background:#cce4f7;border:1px solid #99d1ff"></div>
<div class="a" style="left:241px;top:187px;width:250px;height:47px;background:#cce4f7;border:1px solid #99d1ff"></div>
<div class="a" style="left:291px;top:187px;width:1px;height:47px;background:#99d1ff"></div>
<div class="a" style="left:341px;top:187px;width:1px;height:47px;background:#99d1ff"></div>
<div class="a" style="left:391px;top:187px;width:1px;height:47px;background:#99d1ff"></div>
<div class="a" style="left:441px;top:187px;width:1px;height:47px;background:#99d1ff"></div>
<svg class="a" style="left:31px;top:90px" width="36" height="36" viewBox="0 0 36 36"><path d="M3,12 L3,33 L27,33 L33,16 L12,16 L10,12 Z" fill="#f4d48a" stroke="#807050" stroke-width="1.5"/><path d="M9,17 L26,6 L32,14 L16,22 Z" fill="#fff" stroke="#807050" stroke-width="1.2"/><path d="M4,33 L10,19 L34,19 L28,33 Z" fill="#fbe0a0" stroke="#807050" stroke-width="1.5"/></svg>
<svg class="a" style="left:81px;top:89px" width="36" height="36" viewBox="0 0 36 36"><path d="M3,14 L3,34 L27,34 L33,18 L12,18 L10,14 Z" fill="#f4d48a" stroke="#807050" stroke-width="1.5"/><path d="M4,34 L10,21 L34,21 L28,34 Z" fill="#fbe0a0" stroke="#807050" stroke-width="1.5"/><path d="M17,1 L25,1 L25,7 L30,7 L21,15 L12,7 L17,7 Z" fill="#6cd050" stroke="#808070" stroke-width="1.3"/></svg>
<svg class="a" style="left:140px;top:89px" width="36" height="36" viewBox="0 0 36 36"><path d="M3,5 L7,2 L17,2 L13,5 Z" fill="#f4f4f0" stroke="#6e6e58" stroke-width="1.3"/><rect x="3" y="5" width="10" height="18" fill="#e6e6e0" stroke="#6e6e58" stroke-width="1.5"/><path d="M13,5 L17,2 L17,20 L13,23 Z" fill="#b8b8a8" stroke="#6e6e58" stroke-width="1.3"/><path d="M5,12 h6 M5,15 h6" stroke="#6e6e58" stroke-width="1.2"/><path d="M17,5 L21,2 L31,2 L27,5 Z" fill="#f4f4f0" stroke="#6e6e58" stroke-width="1.3"/><rect x="17" y="5" width="10" height="18" fill="#e6e6e0" stroke="#6e6e58" stroke-width="1.5"/><path d="M27,5 L31,2 L31,20 L27,23 Z" fill="#b8b8a8" stroke="#6e6e58" stroke-width="1.3"/><path d="M19,12 h6 M19,15 h6" stroke="#6e6e58" stroke-width="1.2"/><path d="M9,23 V30 H27 V23" fill="none" stroke="#6e6e58" stroke-width="2"/><circle cx="18" cy="30" r="5" fill="#6cd050" stroke="#909080" stroke-width="1"/></svg>
<svg class="a" style="left:190px;top:89px" width="36" height="36" viewBox="0 0 36 36"><path d="M3,5 L7,2 L17,2 L13,5 Z" fill="#f4f4f0" stroke="#6e6e58" stroke-width="1.3"/><rect x="3" y="5" width="10" height="18" fill="#e6e6e0" stroke="#6e6e58" stroke-width="1.5"/><path d="M13,5 L17,2 L17,20 L13,23 Z" fill="#b8b8a8" stroke="#6e6e58" stroke-width="1.3"/><path d="M5,12 h6 M5,15 h6" stroke="#6e6e58" stroke-width="1.2"/><path d="M17,5 L21,2 L31,2 L27,5 Z" fill="#f4f4f0" stroke="#6e6e58" stroke-width="1.3"/><rect x="17" y="5" width="10" height="18" fill="#e6e6e0" stroke="#6e6e58" stroke-width="1.5"/><path d="M27,5 L31,2 L31,20 L27,23 Z" fill="#b8b8a8" stroke="#6e6e58" stroke-width="1.3"/><path d="M19,12 h6 M19,15 h6" stroke="#6e6e58" stroke-width="1.2"/><path d="M9,23 V30 H27 V23" fill="none" stroke="#6e6e58" stroke-width="2"/><path d="M13,25 L23,35 M23,25 L13,35" stroke="#e85040" stroke-width="3.5"/></svg>
<svg class="a" style="left:237px;top:90px" width="36" height="36" viewBox="0 0 36 36"><path d="M26,6 A14,14 0 1 1 10,6" fill="none" stroke="#909080" stroke-width="3.5"/><path d="M18,4 V17" stroke="#909080" stroke-width="3.5"/><path d="M24,1 L31,1 L30,8 Z" fill="#909080"/></svg>
<svg class="a" style="left:299px;top:90px" width="36" height="36" viewBox="0 0 36 36"><path d="M8,12 Q22,4 28,14 Q32,24 22,26" fill="none" stroke="#b4b4b4" stroke-width="6"/><path d="M2,4 L4,22 L16,14 Z" fill="#b4b4b4"/></svg>
<svg class="a" style="left:346px;top:90px" width="36" height="36" viewBox="0 0 36 36"><path d="M28,12 Q14,4 8,14 Q4,24 14,26" fill="none" stroke="#b4b4b4" stroke-width="6"/><path d="M34,4 L32,22 L20,14 Z" fill="#b4b4b4"/></svg>
<svg class="a" style="left:405px;top:89px" width="36" height="36" viewBox="0 0 36 36"><path d="M14,22 L28,8 M22,6 L30,6 L30,14" fill="none" stroke="#60c040" stroke-width="6"/><path d="M14,22 L28,8 M22,6 L30,6 L30,14" fill="none" stroke="#9ee080" stroke-width="3"/><path d="M4,14 L14,10 L20,13 L20,31 L10,35 L4,32 Z" fill="#e0e0d8" stroke="#60c040" stroke-width="2"/></svg>
<svg class="a" style="left:453px;top:87px" width="36" height="36" viewBox="0 0 36 36"><path d="M18,2 C30,2 36,10 34,18 C33,22 28,20 26,24 C24,30 28,34 18,34 C8,34 2,27 2,18 C2,9 9,2 18,2 Z" fill="#f5d5a8" stroke="#808070" stroke-width="2"/><circle cx="10" cy="13" r="3.2" fill="#30a0e0"/><circle cx="20" cy="8" r="3.2" fill="#60b040"/><circle cx="10" cy="24" r="3.5" fill="#e03020"/><path d="M14,33 L30,10" stroke="#806040" stroke-width="3.5"/><path d="M28,12 L34,3 L33,12 Z" fill="#fff" stroke="#999" stroke-width="1"/></svg>
<svg class="a" style="left:523px;top:89px" width="36" height="36" viewBox="0 0 36 36"><rect x="4" y="2" width="7" height="4" fill="#7a7a62"/><rect x="0" y="5" width="18" height="12" fill="#e8e8e0" stroke="#7a7a62" stroke-width="3"/><circle cx="9.0" cy="11.5" r="4.5" fill="#aaa" stroke="#7a7a62" stroke-width="1.5"/><circle cx="14" cy="15" r="5" fill="#50c040"/><circle cx="14" cy="15" r="2.5" fill="none" stroke="#fff" stroke-width="1.3"/><path d="M22,22 L33,34" stroke="#3050a0" stroke-width="3.5"/><path d="M20,18 L24,22 L20,24 Z" fill="#3050a0"/></svg>
<svg class="a" style="left:572px;top:89px" width="36" height="36" viewBox="0 0 36 36"><rect x="4" y="2" width="7" height="4" fill="#7a7a62"/><rect x="0" y="5" width="18" height="12" fill="#e8e8e0" stroke="#7a7a62" stroke-width="3"/><circle cx="9.0" cy="11.5" r="4.5" fill="#aaa" stroke="#7a7a62" stroke-width="1.5"/><circle cx="14" cy="15" r="5" fill="#50c040"/><circle cx="14" cy="15" r="2.5" fill="none" stroke="#fff" stroke-width="1.3"/><path d="M28,19 V35 M20,27 H36" stroke="#102060" stroke-width="7"/><path d="M28,20 V34 M21,27 H35" stroke="#6a88e0" stroke-width="4"/></svg>
<svg class="a" style="left:485px;top:120px" width="11" height="7" viewBox="0 0 11 7"><path d="M0,0 H11 L5.5,6 Z" fill="#000"/></svg>
<svg class="a" style="left:347px;top:141px" width="36" height="36" viewBox="0 0 36 36"><path d="M6,6 L30,30 M30,6 L6,30" stroke="#6e6e58" stroke-width="3"/><path d="M1,1 L13,4 L4,13 Z" fill="#a6d68a" stroke="#6e6e58" stroke-width="1.3"/><path d="M35,1 L23,4 L32,13 Z" fill="#a6d68a" stroke="#6e6e58" stroke-width="1.3"/><path d="M1,35 L13,32 L4,23 Z" fill="#a6d68a" stroke="#6e6e58" stroke-width="1.3"/><path d="M35,35 L23,32 L32,23 Z" fill="#a6d68a" stroke="#6e6e58" stroke-width="1.3"/></svg>
<svg class="a" style="left:397px;top:141px" width="36" height="36" viewBox="1 1 34 34"><g transform="rotate(0 18 18)"><path d="M3,3 L8,8" stroke="#6e6e58" stroke-width="2.4"/><path d="M3.5,12.5 L12.5,3.5 L14.5,14.5 Z" fill="#a6d68a" stroke="#6e6e58" stroke-width="1.3" stroke-linejoin="round"/></g><g transform="rotate(90 18 18)"><path d="M3,3 L8,8" stroke="#6e6e58" stroke-width="2.4"/><path d="M3.5,12.5 L12.5,3.5 L14.5,14.5 Z" fill="#a6d68a" stroke="#6e6e58" stroke-width="1.3" stroke-linejoin="round"/></g><g transform="rotate(180 18 18)"><path d="M3,3 L8,8" stroke="#6e6e58" stroke-width="2.4"/><path d="M3.5,12.5 L12.5,3.5 L14.5,14.5 Z" fill="#a6d68a" stroke="#6e6e58" stroke-width="1.3" stroke-linejoin="round"/></g><g transform="rotate(270 18 18)"><path d="M3,3 L8,8" stroke="#6e6e58" stroke-width="2.4"/><path d="M3.5,12.5 L12.5,3.5 L14.5,14.5 Z" fill="#a6d68a" stroke="#6e6e58" stroke-width="1.3" stroke-linejoin="round"/></g><circle cx="18" cy="18" r="5.5" fill="#1e88d0" stroke="#6e6e58" stroke-width="1.2"/></svg>
<svg class="a" style="left:447px;top:141px" width="36" height="36" viewBox="0 0 36 36"><path d="M1,8 V1 H8 M13,1 H20 M25,1 H29 V6 M1,13 V20 M1,25 V29 H6" fill="none" stroke="#707070" stroke-width="1.6"/><circle cx="20" cy="20" r="8" fill="#d8ecf8" stroke="#8a8a8a" stroke-width="3"/><path d="M26,26 L33,33" stroke="#8a8a8a" stroke-width="4.5" stroke-linecap="round"/></svg>
<svg class="a" style="left:498px;top:141px" width="36" height="36" viewBox="0 0 36 36"><text x="-1" y="15" font-family="Liberation Sans" font-weight="bold" font-size="14.5" fill="#6a6a6a" text-anchor="start">+X</text><path d="M25.0,29 L25.0,9 L21.5,9 L28,2 L34.5,9 L31.0,9 L31.0,29 Z" fill="#a6d68a" stroke="#6e6e58" stroke-width="1.3" stroke-linejoin="round"/><path d="M24,26.0 L8,26.0 L8,22.5 L1,29 L8,35.5 L8,32.0 L24,32.0 Z" fill="#f5c211" stroke="#6e6e58" stroke-width="1.3" stroke-linejoin="round"/><rect x="23" y="24" width="10" height="10" fill="#e03c28" stroke="#6e6e58" stroke-width="1.3"/></svg>
<svg class="a" style="left:548px;top:141px" width="36" height="36" viewBox="0 0 36 36"><path d="M5.0,29 L5.0,9 L1.5,9 L8,2 L14.5,9 L11.0,9 L11.0,29 Z" fill="#a6d68a" stroke="#6e6e58" stroke-width="1.3" stroke-linejoin="round"/><text x="16" y="15" font-family="Liberation Sans" font-weight="bold" font-size="14.5" fill="#6a6a6a" text-anchor="start">-X</text><path d="M10,26.0 L28,26.0 L28,22.5 L35,29 L28,35.5 L28,32.0 L10,32.0 Z" fill="#f5c211" stroke="#6e6e58" stroke-width="1.3" stroke-linejoin="round"/><rect x="3" y="24" width="10" height="10" fill="#e03c28" stroke="#6e6e58" stroke-width="1.3"/></svg>
<svg class="a" style="left:598px;top:141px" width="36" height="36" viewBox="0 0 36 36"><path d="M5.0,29 L5.0,9 L1.5,9 L8,2 L14.5,9 L11.0,9 L11.0,29 Z" fill="#a6d68a" stroke="#6e6e58" stroke-width="1.3" stroke-linejoin="round"/><text x="15" y="15" font-family="Liberation Sans" font-weight="bold" font-size="14.5" fill="#6a6a6a" text-anchor="start">+Y</text><path d="M10,26.0 L28,26.0 L28,22.5 L35,29 L28,35.5 L28,32.0 L10,32.0 Z" fill="#e03c28" stroke="#6e6e58" stroke-width="1.3" stroke-linejoin="round"/><rect x="3" y="24" width="10" height="10" fill="#f5c211" stroke="#6e6e58" stroke-width="1.3"/></svg>
<svg class="a" style="left:648px;top:141px" width="36" height="36" viewBox="0 0 36 36"><text x="0" y="15" font-family="Liberation Sans" font-weight="bold" font-size="14.5" fill="#6a6a6a" text-anchor="start">-Y</text><path d="M25.0,29 L25.0,9 L21.5,9 L28,2 L34.5,9 L31.0,9 L31.0,29 Z" fill="#a6d68a" stroke="#6e6e58" stroke-width="1.3" stroke-linejoin="round"/><path d="M24,26.0 L8,26.0 L8,22.5 L1,29 L8,35.5 L8,32.0 L24,32.0 Z" fill="#e03c28" stroke="#6e6e58" stroke-width="1.3" stroke-linejoin="round"/><rect x="23" y="24" width="10" height="10" fill="#f5c211" stroke="#6e6e58" stroke-width="1.3"/></svg>
<svg class="a" style="left:698px;top:141px" width="36" height="36" viewBox="0 0 36 36"><text x="-1" y="15" font-family="Liberation Sans" font-weight="bold" font-size="14.5" fill="#6a6a6a" text-anchor="start">+Z</text><path d="M25.0,29 L25.0,9 L21.5,9 L28,2 L34.5,9 L31.0,9 L31.0,29 Z" fill="#f5c211" stroke="#6e6e58" stroke-width="1.3" stroke-linejoin="round"/><path d="M24,26.0 L8,26.0 L8,22.5 L1,29 L8,35.5 L8,32.0 L24,32.0 Z" fill="#e03c28" stroke="#6e6e58" stroke-width="1.3" stroke-linejoin="round"/><rect x="23" y="24" width="10" height="10" fill="#a6d68a" stroke="#6e6e58" stroke-width="1.3"/></svg>
<svg class="a" style="left:748px;top:141px" width="36" height="36" viewBox="0 0 36 36"><path d="M5.0,29 L5.0,9 L1.5,9 L8,2 L14.5,9 L11.0,9 L11.0,29 Z" fill="#f5c211" stroke="#6e6e58" stroke-width="1.3" stroke-linejoin="round"/><text x="16" y="15" font-family="Liberation Sans" font-weight="bold" font-size="14.5" fill="#6a6a6a" text-anchor="start">-Z</text><path d="M10,26.0 L28,26.0 L28,22.5 L35,29 L28,35.5 L28,32.0 L10,32.0 Z" fill="#e03c28" stroke="#6e6e58" stroke-width="1.3" stroke-linejoin="round"/><rect x="3" y="24" width="10" height="10" fill="#a6d68a" stroke="#6e6e58" stroke-width="1.3"/></svg>
<svg class="a" style="left:797px;top:141px" width="36" height="36" viewBox="0 0 36 36"><path d="M13,24.5 A9.5,9.5 0 1 1 23.5,13" fill="none" stroke="#6e6e58" stroke-width="6"/><path d="M13,24.5 A9.5,9.5 0 1 1 23.5,13" fill="none" stroke="#a6d68a" stroke-width="3.6"/><path d="M17.5,12 L29.5,12 L23.5,20 Z" fill="#a6d68a" stroke="#6e6e58" stroke-width="1.2"/><text x="37" y="36" font-family="Liberation Sans" font-weight="bold" font-size="12.5" fill="#6a6a6a" text-anchor="end">+90</text></svg>
<svg class="a" style="left:847px;top:141px" width="36" height="36" viewBox="0 0 36 36"><path d="M23,24.5 A9.5,9.5 0 1 0 12.5,13" fill="none" stroke="#6e6e58" stroke-width="6"/><path d="M23,24.5 A9.5,9.5 0 1 0 12.5,13" fill="none" stroke="#a6d68a" stroke-width="3.6"/><path d="M18.5,12 L6.5,12 L12.5,20 Z" fill="#a6d68a" stroke="#6e6e58" stroke-width="1.2"/><text x="-1" y="36" font-family="Liberation Sans" font-weight="bold" font-size="12.5" fill="#6a6a6a" text-anchor="start">-90</text></svg>
<svg class="a" style="left:915px;top:144px" width="36" height="36" viewBox="0 0 36 36"><path d="M8.5,22 L8.5,8 L5.0,8 L11,1 L17.0,8 L13.5,8 L13.5,22 Z" fill="#f5c211" stroke="#6e6e58" stroke-width="1.3" stroke-linejoin="round"/><path d="M11,19.5 L28,19.5 L28,16.0 L35,22 L28,28.0 L28,24.5 L11,24.5 Z" fill="#e03c28" stroke="#6e6e58" stroke-width="1.3" stroke-linejoin="round"/><path d="M11,22 L3,33 M3,33 L2,25 L10,31 Z" stroke="#6e6e58" fill="#a6d68a" stroke-width="1.3"/><path d="M11,22 L4,31" stroke="#a6d68a" stroke-width="4"/><ellipse cx="25" cy="10" rx="6.5" ry="4" fill="#fff" stroke="#888" stroke-width="1"/><circle cx="25" cy="10" r="2.6" fill="#222"/></svg>
<svg class="a" style="left:963px;top:141px" width="36" height="36" viewBox="0 0 36 36"><path d="M29.700000000000003,12.149999999999999 A13,13 0 1 0 31,20" fill="none" stroke="#6e6e58" stroke-width="7.5"/><path d="M29.700000000000003,12.149999999999999 A13,13 0 1 0 31,20" fill="none" stroke="#a6d68a" stroke-width="5"/><path d="M35,6 L35,15.4 L23.85,14.1 Z" fill="#a6d68a" stroke="#6e6e58" stroke-width="1.3"/><circle cx="18" cy="18" r="4" fill="#f5c211" stroke="#6e6e58" stroke-width="1"/></svg>
<svg class="a" style="left:1013px;top:141px" width="36" height="36" viewBox="0 0 36 36"><path d="M29.700000000000003,12.149999999999999 A13,13 0 1 0 31,20" fill="none" stroke="#6e6e58" stroke-width="7.5"/><path d="M29.700000000000003,12.149999999999999 A13,13 0 1 0 31,20" fill="none" stroke="#a6d68a" stroke-width="5"/><path d="M35,6 L35,15.4 L23.85,14.1 Z" fill="#a6d68a" stroke="#6e6e58" stroke-width="1.3"/><path d="M18,9 V27 M9,18 H27" stroke="#6e6e58" stroke-width="1.3"/><circle cx="18" cy="18" r="4" fill="#f5c211" stroke="#6e6e58" stroke-width="1"/></svg>
<svg class="a" style="left:1063px;top:141px" width="36" height="36" viewBox="0 0 36 36"><path d="M29.700000000000003,12.149999999999999 A13,13 0 1 0 31,20" fill="none" stroke="#6e6e58" stroke-width="7.5"/><path d="M29.700000000000003,12.149999999999999 A13,13 0 1 0 31,20" fill="none" stroke="#a6d68a" stroke-width="5"/><path d="M35,6 L35,15.4 L23.85,14.1 Z" fill="#a6d68a" stroke="#6e6e58" stroke-width="1.3"/><path transform="translate(22,21) scale(0.9)" d="M0,0 L0,14 L3.5,10.5 L6.5,16 L9,14.5 L6,9.5 L10.5,9 Z" fill="#222" stroke="#fff" stroke-width="0.6"/></svg>
<svg class="a" style="left:1144px;top:144px" width="40" height="29" viewBox="0 0 35 26"><path d="M6,2 H13 L8,26 H1 Z M16,2 H23 L18,26 H11 Z M26,2 H33 L28,26 H21 Z" fill="#c0c0c4"/></svg>
<svg class="a" style="left:33px;top:196px" width="36" height="36" viewBox="0 0 36 36"><g transform="rotate(-40 16 16)"><rect x="0" y="10" width="32" height="11" fill="#f5c211" stroke="#707050" stroke-width="1.3"/><path d="M4,10 v4 M8,10 v6 M12,10 v4 M16,10 v6 M20,10 v4 M24,10 v6 M28,10 v4" stroke="#707050" stroke-width="1"/></g></svg>
<svg class="a" style="left:98px;top:193px" width="36" height="36" viewBox="0 0 36 36"><path d="M2,8 L20,4 L32,8 L32,26 L14,31 L2,26 Z" fill="none" stroke="#1e88d0" stroke-width="1.5"/><path d="M2,8 L14,12 L32,8 M14,12 V31" fill="none" stroke="#1e88d0" stroke-width="1.5"/><path d="M6.0,9.333333333333334 V27.666666666666668 M2,14.0 L14,18.333333333333332 L32,14.0 M20.0,10.666666666666666 V29.333333333333332 M8.0,6.666666666666667 L20.0,10.666666666666666  M6.0,9.333333333333334 L24.0,5.333333333333333" fill="none" stroke="#1e88d0" stroke-width="1.2"/><path d="M10.0,10.666666666666666 V29.333333333333332 M2,20.0 L14,24.666666666666664 L32,20.0 M26.0,9.333333333333334 V27.666666666666668 M14.0,5.333333333333334 L26.0,9.333333333333334  M10.0,10.666666666666666 L28.0,6.666666666666666" fill="none" stroke="#1e88d0" stroke-width="1.2"/></svg>
<svg class="a" style="left:147px;top:193px" width="36" height="36" viewBox="0 0 36 36"><circle cx="11" cy="14" r="10" fill="#1e88d0"/><rect x="16" y="1" width="19" height="19" fill="#1e88d0"/><path d="M10,35 L19,17 L28,35 Z" fill="#1e88d0" stroke="#f0f0f0" stroke-width="1.2"/></svg>
<svg class="a" style="left:199px;top:194px" width="36" height="36" viewBox="0 0 36 36"><path d="M2,8 L18,3 L31,7 L31,26 L14,31 L2,26 Z" fill="#1e88d0" stroke="#111" stroke-width="1.6"/><path d="M2,8 L14,12 L31,7 L18,3 Z" fill="#50b0f0" stroke="#111" stroke-width="1.2"/><path d="M2,8 L14,12 L14,31 L2,26 Z" fill="#8cd0f8" stroke="#111" stroke-width="1.2"/></svg>
<svg class="a" style="left:250px;top:196px" width="36" height="36" viewBox="0 0 36 36"><path d="M2,8 L18,3 L31,7 L31,26 L14,31 L2,26 Z" fill="#e8eef4" stroke="#888" stroke-width="1.4"/><path d="M2,8 L14,12 L31,7 M14,12 V31" fill="none" stroke="#888" stroke-width="1.2"/><path d="M14,12 L31,7 L31,26 L14,31 Z" fill="#1e88d0"/></svg>
<svg class="a" style="left:301px;top:196px" width="36" height="36" viewBox="0 0 36 36"><path d="M2,8 L18,3 L31,7 L31,26 L14,31 L2,26 Z" fill="#e8eef4" stroke="#888" stroke-width="1.4"/><path d="M2,8 L14,12 L31,7 M14,12 V31" fill="none" stroke="#888" stroke-width="1.2"/><path d="M14,12 V31" stroke="#1e88d0" stroke-width="3"/></svg>
<svg class="a" style="left:351px;top:196px" width="36" height="36" viewBox="0 0 36 36"><path d="M2,8 L18,3 L31,7 L31,26 L14,31 L2,26 Z" fill="#e8eef4" stroke="#888" stroke-width="1.4"/><path d="M2,8 L14,12 L31,7 M14,12 V31" fill="none" stroke="#888" stroke-width="1.2"/><circle cx="14" cy="11" r="3.5" fill="#1e88d0"/></svg>
<svg class="a" style="left:401px;top:196px" width="36" height="36" viewBox="0 0 36 36"><circle cx="11" cy="14" r="10" fill="#1e88d0"/><rect x="16" y="1" width="19" height="19" fill="#1e88d0"/><path d="M10,35 L19,17 L28,35 Z" fill="#1e88d0" stroke="#f0f0f0" stroke-width="1.2"/></svg>
<svg class="a" style="left:450px;top:196px" width="36" height="36" viewBox="0 0 36 36"><rect x="2" y="2" width="15" height="15" rx="3" fill="#1e88d0" stroke="#777" stroke-width="2.2"/><rect x="22" y="7" width="9" height="9" rx="2.5" fill="#1e88d0" stroke="#777" stroke-width="2.2"/><rect x="7" y="22" width="9" height="9" rx="2.5" fill="#1e88d0" stroke="#777" stroke-width="2.2"/><rect x="22" y="22" width="9" height="9" rx="2.5" fill="#1e88d0" stroke="#777" stroke-width="2.2"/></svg>
<svg class="a" style="left:501px;top:195px" width="36" height="36" viewBox="1 1 33 33"><rect x="1.5" y="1.5" width="3" height="3" fill="#70b040"/><rect x="1.5" y="23.5" width="3" height="3" fill="#70b040"/><rect x="7.0" y="1.5" width="3" height="3" fill="#70b040"/><rect x="7.0" y="23.5" width="3" height="3" fill="#70b040"/><rect x="12.5" y="1.5" width="3" height="3" fill="#70b040"/><rect x="12.5" y="23.5" width="3" height="3" fill="#70b040"/><rect x="18.0" y="1.5" width="3" height="3" fill="#70b040"/><rect x="18.0" y="23.5" width="3" height="3" fill="#70b040"/><rect x="23.5" y="1.5" width="3" height="3" fill="#70b040"/><rect x="23.5" y="23.5" width="3" height="3" fill="#70b040"/><rect x="1.5" y="7.0" width="3" height="3" fill="#70b040"/><rect x="23.5" y="7.0" width="3" height="3" fill="#70b040"/><rect x="1.5" y="12.5" width="3" height="3" fill="#70b040"/><rect x="23.5" y="12.5" width="3" height="3" fill="#70b040"/><rect x="1.5" y="18.0" width="3" height="3" fill="#70b040"/><rect x="23.5" y="18.0" width="3" height="3" fill="#70b040"/><path d="M7,7 H23 L17,14 V21 L14,19 V14 Z" fill="#1e88d0"/><path transform="translate(16,14) scale(1.1)" d="M0,0 L0,14 L3.5,10.5 L6.5,16 L9,14.5 L6,9.5 L10.5,9 Z" fill="#6e6e58" stroke="#fff" stroke-width="0.6"/></svg>
<svg class="a" style="left:543px;top:295px" width="36" height="36" viewBox="0 0 36 36"><rect x="16" y="0" width="7" height="4" fill="#7a7a62"/><rect x="12" y="3" width="22" height="16" fill="#e8e8e0" stroke="#7a7a62" stroke-width="3"/><circle cx="23.0" cy="11.5" r="5.7" fill="#aaa" stroke="#7a7a62" stroke-width="1.5"/><path d="M8,30 Q6,22 16,22 Q25,22 22,32" fill="none" stroke="#e83020" stroke-width="4.5"/><path d="M1,26 L10,20 L11,32 Z" fill="#e83020"/></svg>
<svg class="a" style="left:593px;top:295px" width="36" height="36" viewBox="0 0 36 36"><rect x="4" y="0" width="7" height="4" fill="#b8b8b8"/><rect x="0" y="3" width="22" height="16" fill="#e8e8e0" stroke="#b8b8b8" stroke-width="3"/><circle cx="11.0" cy="11.5" r="5.7" fill="#aaa" stroke="#b8b8b8" stroke-width="1.5"/><path d="M28,30 Q30,22 20,22 Q11,22 14,32" fill="none" stroke="#bdbdbd" stroke-width="4.5"/><path d="M35,26 L26,20 L25,32 Z" fill="#bdbdbd"/></svg>
<svg class="a" style="left:652px;top:294px" width="36" height="36" viewBox="0 0 36 36"><path d="M1,8 V1 H8 M28,1 H35 V8 M1,28 V35 H8 M28,35 H35 V28" fill="none" stroke="#707060" stroke-width="2.2"/><rect x="10" y="5" width="7" height="4" fill="#7a7a62"/><rect x="6" y="8" width="24" height="18" fill="#e8e8e0" stroke="#7a7a62" stroke-width="3"/><circle cx="18.0" cy="17.5" r="6.3" fill="#aaa" stroke="#7a7a62" stroke-width="1.5"/></svg>
<svg class="a" style="left:761px;top:294px" width="36" height="36" viewBox="0 0 36 36"><rect x="5" y="1" width="7" height="4" fill="#7a7a62"/><rect x="1" y="4" width="28" height="20" fill="#e8e8e0" stroke="#7a7a62" stroke-width="3"/><circle cx="15.0" cy="14.5" r="6.8999999999999995" fill="#aaa" stroke="#7a7a62" stroke-width="1.5"/><circle cx="24" cy="24" r="9" fill="#50c040"/><rect x="20" y="20" width="7" height="7" fill="none" stroke="#fff" stroke-width="2"/><path d="M26,26 L29,29" stroke="#fff" stroke-width="2"/></svg>
<svg class="a" style="left:821px;top:297px" width="36" height="36" viewBox="0 0 36 36"><rect x="0.3999999999999999" y="0.3999999999999999" width="3.2" height="3.2" fill="#777"/><rect x="0.3999999999999999" y="26.4" width="3.2" height="3.2" fill="#777"/><rect x="6.9" y="0.3999999999999999" width="3.2" height="3.2" fill="#777"/><rect x="6.9" y="26.4" width="3.2" height="3.2" fill="#777"/><rect x="13.4" y="0.3999999999999999" width="3.2" height="3.2" fill="#777"/><rect x="13.4" y="26.4" width="3.2" height="3.2" fill="#777"/><rect x="19.9" y="0.3999999999999999" width="3.2" height="3.2" fill="#777"/><rect x="19.9" y="26.4" width="3.2" height="3.2" fill="#777"/><rect x="26.4" y="0.3999999999999999" width="3.2" height="3.2" fill="#777"/><rect x="26.4" y="26.4" width="3.2" height="3.2" fill="#777"/><rect x="0.3999999999999999" y="6.9" width="3.2" height="3.2" fill="#777"/><rect x="26.4" y="6.9" width="3.2" height="3.2" fill="#777"/><rect x="0.3999999999999999" y="13.4" width="3.2" height="3.2" fill="#777"/><rect x="26.4" y="13.4" width="3.2" height="3.2" fill="#777"/><rect x="0.3999999999999999" y="19.9" width="3.2" height="3.2" fill="#777"/><rect x="26.4" y="19.9" width="3.2" height="3.2" fill="#777"/><path d="M8,7 H18 M13,2 V12" stroke="#1a8a10" stroke-width="3.5"/><path transform="translate(16,14) scale(1.1)" d="M0,0 L0,14 L3.5,10.5 L6.5,16 L9,14.5 L6,9.5 L10.5,9 Z" fill="#6e6e58" stroke="#fff" stroke-width="0.6"/></svg>
<svg class="a" style="left:871px;top:297px" width="36" height="36" viewBox="0 0 36 36"><rect x="0.3999999999999999" y="0.3999999999999999" width="3.2" height="3.2" fill="#777"/><rect x="0.3999999999999999" y="26.4" width="3.2" height="3.2" fill="#777"/><rect x="6.9" y="0.3999999999999999" width="3.2" height="3.2" fill="#777"/><rect x="6.9" y="26.4" width="3.2" height="3.2" fill="#777"/><rect x="13.4" y="0.3999999999999999" width="3.2" height="3.2" fill="#777"/><rect x="13.4" y="26.4" width="3.2" height="3.2" fill="#777"/><rect x="19.9" y="0.3999999999999999" width="3.2" height="3.2" fill="#777"/><rect x="19.9" y="26.4" width="3.2" height="3.2" fill="#777"/><rect x="26.4" y="0.3999999999999999" width="3.2" height="3.2" fill="#777"/><rect x="26.4" y="26.4" width="3.2" height="3.2" fill="#777"/><rect x="0.3999999999999999" y="6.9" width="3.2" height="3.2" fill="#777"/><rect x="26.4" y="6.9" width="3.2" height="3.2" fill="#777"/><rect x="0.3999999999999999" y="13.4" width="3.2" height="3.2" fill="#777"/><rect x="26.4" y="13.4" width="3.2" height="3.2" fill="#777"/><rect x="0.3999999999999999" y="19.9" width="3.2" height="3.2" fill="#777"/><rect x="26.4" y="19.9" width="3.2" height="3.2" fill="#777"/><path d="M7,8 H19" stroke="#f00" stroke-width="3.5"/><path transform="translate(16,14) scale(1.1)" d="M0,0 L0,14 L3.5,10.5 L6.5,16 L9,14.5 L6,9.5 L10.5,9 Z" fill="#6e6e58" stroke="#fff" stroke-width="0.6"/></svg>
<svg class="a" style="left:921px;top:297px" width="36" height="36" viewBox="0 0 36 36"><rect x="0.3999999999999999" y="0.3999999999999999" width="3.2" height="3.2" fill="#777"/><rect x="0.3999999999999999" y="26.4" width="3.2" height="3.2" fill="#777"/><rect x="6.9" y="0.3999999999999999" width="3.2" height="3.2" fill="#777"/><rect x="6.9" y="26.4" width="3.2" height="3.2" fill="#777"/><rect x="13.4" y="0.3999999999999999" width="3.2" height="3.2" fill="#777"/><rect x="13.4" y="26.4" width="3.2" height="3.2" fill="#777"/><rect x="19.9" y="0.3999999999999999" width="3.2" height="3.2" fill="#777"/><rect x="19.9" y="26.4" width="3.2" height="3.2" fill="#777"/><rect x="26.4" y="0.3999999999999999" width="3.2" height="3.2" fill="#777"/><rect x="26.4" y="26.4" width="3.2" height="3.2" fill="#777"/><rect x="0.3999999999999999" y="6.9" width="3.2" height="3.2" fill="#777"/><rect x="26.4" y="6.9" width="3.2" height="3.2" fill="#777"/><rect x="0.3999999999999999" y="13.4" width="3.2" height="3.2" fill="#777"/><rect x="26.4" y="13.4" width="3.2" height="3.2" fill="#777"/><rect x="0.3999999999999999" y="19.9" width="3.2" height="3.2" fill="#777"/><rect x="26.4" y="19.9" width="3.2" height="3.2" fill="#777"/><path d="M8,6 H18 M13,1 V11" stroke="#1a8a10" stroke-width="3.5"/><path d="M7,15 H19" stroke="#f00" stroke-width="3.5"/><path transform="translate(16,14) scale(1.1)" d="M0,0 L0,14 L3.5,10.5 L6.5,16 L9,14.5 L6,9.5 L10.5,9 Z" fill="#6e6e58" stroke="#fff" stroke-width="0.6"/></svg>
<svg class="a" style="left:976px;top:293px" width="36" height="36" viewBox="0 0 36 36"><rect x="0.6000000000000001" y="0.6000000000000001" width="2.8" height="2.8" fill="#6a6a58"/><rect x="0.6000000000000001" y="30.6" width="2.8" height="2.8" fill="#6a6a58"/><rect x="6.6" y="0.6000000000000001" width="2.8" height="2.8" fill="#6a6a58"/><rect x="6.6" y="30.6" width="2.8" height="2.8" fill="#6a6a58"/><rect x="12.6" y="0.6000000000000001" width="2.8" height="2.8" fill="#6a6a58"/><rect x="12.6" y="30.6" width="2.8" height="2.8" fill="#6a6a58"/><rect x="18.6" y="0.6000000000000001" width="2.8" height="2.8" fill="#6a6a58"/><rect x="18.6" y="30.6" width="2.8" height="2.8" fill="#6a6a58"/><rect x="24.6" y="0.6000000000000001" width="2.8" height="2.8" fill="#6a6a58"/><rect x="24.6" y="30.6" width="2.8" height="2.8" fill="#6a6a58"/><rect x="30.6" y="0.6000000000000001" width="2.8" height="2.8" fill="#6a6a58"/><rect x="30.6" y="30.6" width="2.8" height="2.8" fill="#6a6a58"/><rect x="0.6000000000000001" y="6.6" width="2.8" height="2.8" fill="#6a6a58"/><rect x="30.6" y="6.6" width="2.8" height="2.8" fill="#6a6a58"/><rect x="0.6000000000000001" y="12.6" width="2.8" height="2.8" fill="#6a6a58"/><rect x="30.6" y="12.6" width="2.8" height="2.8" fill="#6a6a58"/><rect x="0.6000000000000001" y="18.6" width="2.8" height="2.8" fill="#6a6a58"/><rect x="30.6" y="18.6" width="2.8" height="2.8" fill="#6a6a58"/><rect x="0.6000000000000001" y="24.6" width="2.8" height="2.8" fill="#6a6a58"/><rect x="30.6" y="24.6" width="2.8" height="2.8" fill="#6a6a58"/><path d="M7,25 L17,6 L26,25 Z" fill="#a6d68a" stroke="#80c070" stroke-width="1"/><path transform="translate(21,20) scale(1.1)" d="M0,0 L0,14 L3.5,10.5 L6.5,16 L9,14.5 L6,9.5 L10.5,9 Z" fill="#6e6e58" stroke="#fff" stroke-width="0.6"/></svg>
<svg class="a" style="left:1026px;top:293px" width="36" height="36" viewBox="0 0 36 36"><rect x="0.6000000000000001" y="0.6000000000000001" width="2.8" height="2.8" fill="#6a6a58"/><rect x="0.6000000000000001" y="30.6" width="2.8" height="2.8" fill="#6a6a58"/><rect x="6.6" y="0.6000000000000001" width="2.8" height="2.8" fill="#6a6a58"/><rect x="6.6" y="30.6" width="2.8" height="2.8" fill="#6a6a58"/><rect x="12.6" y="0.6000000000000001" width="2.8" height="2.8" fill="#6a6a58"/><rect x="12.6" y="30.6" width="2.8" height="2.8" fill="#6a6a58"/><rect x="18.6" y="0.6000000000000001" width="2.8" height="2.8" fill="#6a6a58"/><rect x="18.6" y="30.6" width="2.8" height="2.8" fill="#6a6a58"/><rect x="24.6" y="0.6000000000000001" width="2.8" height="2.8" fill="#6a6a58"/><rect x="24.6" y="30.6" width="2.8" height="2.8" fill="#6a6a58"/><rect x="30.6" y="0.6000000000000001" width="2.8" height="2.8" fill="#6a6a58"/><rect x="30.6" y="30.6" width="2.8" height="2.8" fill="#6a6a58"/><rect x="0.6000000000000001" y="6.6" width="2.8" height="2.8" fill="#6a6a58"/><rect x="30.6" y="6.6" width="2.8" height="2.8" fill="#6a6a58"/><rect x="0.6000000000000001" y="12.6" width="2.8" height="2.8" fill="#6a6a58"/><rect x="30.6" y="12.6" width="2.8" height="2.8" fill="#6a6a58"/><rect x="0.6000000000000001" y="18.6" width="2.8" height="2.8" fill="#6a6a58"/><rect x="30.6" y="18.6" width="2.8" height="2.8" fill="#6a6a58"/><rect x="0.6000000000000001" y="24.6" width="2.8" height="2.8" fill="#6a6a58"/><rect x="30.6" y="24.6" width="2.8" height="2.8" fill="#6a6a58"/><path d="M7,25 L17,6 L26,25 Z" fill="none" stroke="#a8d8a0" stroke-width="1" stroke-dasharray="2,2"/><rect x="15" y="4" width="4" height="4" fill="#f00"/><rect x="5" y="23" width="4" height="4" fill="#f00"/><rect x="24" y="23" width="4" height="4" fill="#f00"/><path transform="translate(21,20) scale(1.1)" d="M0,0 L0,14 L3.5,10.5 L6.5,16 L9,14.5 L6,9.5 L10.5,9 Z" fill="#6e6e58" stroke="#fff" stroke-width="0.6"/></svg>
<svg class="a" style="left:1077px;top:293px" width="36" height="36" viewBox="0 0 36 36"><rect x="-0.25" y="2.75" width="2.5" height="2.5" fill="#888"/><rect x="-0.25" y="28.75" width="2.5" height="2.5" fill="#888"/><rect x="6.416666666666667" y="2.75" width="2.5" height="2.5" fill="#888"/><rect x="6.416666666666667" y="28.75" width="2.5" height="2.5" fill="#888"/><rect x="13.083333333333334" y="2.75" width="2.5" height="2.5" fill="#888"/><rect x="13.083333333333334" y="28.75" width="2.5" height="2.5" fill="#888"/><rect x="19.75" y="2.75" width="2.5" height="2.5" fill="#888"/><rect x="19.75" y="28.75" width="2.5" height="2.5" fill="#888"/><rect x="-0.25" y="9.25" width="2.5" height="2.5" fill="#888"/><rect x="19.75" y="9.25" width="2.5" height="2.5" fill="#888"/><rect x="-0.25" y="15.75" width="2.5" height="2.5" fill="#888"/><rect x="19.75" y="15.75" width="2.5" height="2.5" fill="#888"/><rect x="-0.25" y="22.25" width="2.5" height="2.5" fill="#888"/><rect x="19.75" y="22.25" width="2.5" height="2.5" fill="#888"/><path d="M4,12 L16,7 L29,10 L29,22 L16,26 L4,22 Z" fill="#80c060" stroke="#60a040" stroke-width="1"/><path d="M4,12 L16,16 L29,10 M16,16 V26" fill="none" stroke="#b0e090" stroke-width="1"/><path transform="translate(13,20) scale(1.1)" d="M0,0 L0,14 L3.5,10.5 L6.5,16 L9,14.5 L6,9.5 L10.5,9 Z" fill="#6e6e58" stroke="#fff" stroke-width="0.6"/></svg>
<svg class="a" style="left:1127px;top:293px" width="36" height="36" viewBox="0 0 36 36"><rect x="-0.25" y="2.75" width="2.5" height="2.5" fill="#999"/><rect x="-0.25" y="28.75" width="2.5" height="2.5" fill="#999"/><rect x="6.416666666666667" y="2.75" width="2.5" height="2.5" fill="#999"/><rect x="6.416666666666667" y="28.75" width="2.5" height="2.5" fill="#999"/><rect x="13.083333333333334" y="2.75" width="2.5" height="2.5" fill="#999"/><rect x="13.083333333333334" y="28.75" width="2.5" height="2.5" fill="#999"/><rect x="19.75" y="2.75" width="2.5" height="2.5" fill="#999"/><rect x="19.75" y="28.75" width="2.5" height="2.5" fill="#999"/><rect x="-0.25" y="9.25" width="2.5" height="2.5" fill="#999"/><rect x="19.75" y="9.25" width="2.5" height="2.5" fill="#999"/><rect x="-0.25" y="15.75" width="2.5" height="2.5" fill="#999"/><rect x="19.75" y="15.75" width="2.5" height="2.5" fill="#999"/><rect x="-0.25" y="22.25" width="2.5" height="2.5" fill="#999"/><rect x="19.75" y="22.25" width="2.5" height="2.5" fill="#999"/><rect x="13.0" y="7.0" width="2" height="2" fill="#bbb"/><rect x="13.0" y="25.0" width="2" height="2" fill="#bbb"/><rect x="18.0" y="7.0" width="2" height="2" fill="#bbb"/><rect x="18.0" y="25.0" width="2" height="2" fill="#bbb"/><rect x="23.0" y="7.0" width="2" height="2" fill="#bbb"/><rect x="23.0" y="25.0" width="2" height="2" fill="#bbb"/><rect x="28.0" y="7.0" width="2" height="2" fill="#bbb"/><rect x="28.0" y="25.0" width="2" height="2" fill="#bbb"/><rect x="33.0" y="7.0" width="2" height="2" fill="#bbb"/><rect x="33.0" y="25.0" width="2" height="2" fill="#bbb"/><rect x="13.0" y="13.0" width="2" height="2" fill="#bbb"/><rect x="33.0" y="13.0" width="2" height="2" fill="#bbb"/><rect x="13.0" y="19.0" width="2" height="2" fill="#bbb"/><rect x="33.0" y="19.0" width="2" height="2" fill="#bbb"/><rect x="4" y="12" width="4" height="4" fill="#f33"/><rect x="10" y="14" width="4" height="4" fill="#f33"/><rect x="4" y="18" width="4" height="4" fill="#f33"/><rect x="10" y="20" width="4" height="4" fill="#f33"/><rect x="20" y="3" width="4" height="4" fill="#f33"/><rect x="33" y="10" width="4" height="4" fill="#f33"/><rect x="33" y="21" width="4" height="4" fill="#f33"/><path transform="translate(16,20) scale(1.1)" d="M0,0 L0,14 L3.5,10.5 L6.5,16 L9,14.5 L6,9.5 L10.5,9 Z" fill="#6e6e58" stroke="#fff" stroke-width="0.6"/></svg>
<svg class="a" style="left:1178px;top:293px" width="36" height="36" viewBox="0 0 36 36"><rect x="0.3999999999999999" y="0.3999999999999999" width="3.2" height="3.2" fill="#183818"/><rect x="0.3999999999999999" y="5.4" width="3.2" height="3.2" fill="#183818"/><rect x="0.3999999999999999" y="10.4" width="3.2" height="3.2" fill="#183818"/><rect x="0.3999999999999999" y="15.4" width="3.2" height="3.2" fill="#183818"/><rect x="0.3999999999999999" y="20.4" width="3.2" height="3.2" fill="#183818"/><rect x="3.4" y="25.4" width="3.2" height="3.2" fill="#183818"/><rect x="8.4" y="27.4" width="3.2" height="3.2" fill="#183818"/><rect x="13.4" y="29.4" width="3.2" height="3.2" fill="#183818"/><rect x="18.4" y="31.4" width="3.2" height="3.2" fill="#183818"/><rect x="22.4" y="29.4" width="3.2" height="3.2" fill="#183818"/><rect x="26.4" y="25.4" width="3.2" height="3.2" fill="#183818"/><rect x="21.4" y="20.4" width="3.2" height="3.2" fill="#183818"/><rect x="18.4" y="15.4" width="3.2" height="3.2" fill="#183818"/><rect x="15.4" y="10.4" width="3.2" height="3.2" fill="#183818"/><rect x="19.4" y="5.4" width="3.2" height="3.2" fill="#183818"/><rect x="24.4" y="0.3999999999999999" width="3.2" height="3.2" fill="#183818"/><rect x="19.4" y="2.4" width="3.2" height="3.2" fill="#183818"/><rect x="14.4" y="4.4" width="3.2" height="3.2" fill="#183818"/><rect x="9.4" y="5.4" width="3.2" height="3.2" fill="#183818"/><rect x="4.4" y="2.4" width="3.2" height="3.2" fill="#183818"/><path d="M2,18 L18,9 L18,26 Z" fill="#a6d68a" stroke="#60a050" stroke-width="1"/></svg>
<svg class="a" style="left:1228px;top:293px" width="36" height="36" viewBox="0 0 36 36"><rect x="0.3999999999999999" y="0.3999999999999999" width="3.2" height="3.2" fill="#183818"/><rect x="0.3999999999999999" y="5.4" width="3.2" height="3.2" fill="#183818"/><rect x="0.3999999999999999" y="10.4" width="3.2" height="3.2" fill="#183818"/><rect x="0.3999999999999999" y="15.4" width="3.2" height="3.2" fill="#183818"/><rect x="0.3999999999999999" y="20.4" width="3.2" height="3.2" fill="#183818"/><rect x="3.4" y="25.4" width="3.2" height="3.2" fill="#183818"/><rect x="8.4" y="27.4" width="3.2" height="3.2" fill="#183818"/><rect x="13.4" y="29.4" width="3.2" height="3.2" fill="#183818"/><rect x="18.4" y="31.4" width="3.2" height="3.2" fill="#183818"/><rect x="22.4" y="29.4" width="3.2" height="3.2" fill="#183818"/><rect x="26.4" y="25.4" width="3.2" height="3.2" fill="#183818"/><rect x="21.4" y="20.4" width="3.2" height="3.2" fill="#183818"/><rect x="18.4" y="15.4" width="3.2" height="3.2" fill="#183818"/><rect x="15.4" y="10.4" width="3.2" height="3.2" fill="#183818"/><rect x="19.4" y="5.4" width="3.2" height="3.2" fill="#183818"/><rect x="24.4" y="0.3999999999999999" width="3.2" height="3.2" fill="#183818"/><rect x="19.4" y="2.4" width="3.2" height="3.2" fill="#183818"/><rect x="14.4" y="4.4" width="3.2" height="3.2" fill="#183818"/><rect x="9.4" y="5.4" width="3.2" height="3.2" fill="#183818"/><rect x="4.4" y="2.4" width="3.2" height="3.2" fill="#183818"/><rect x="6" y="10" width="4" height="4" fill="#f33"/><rect x="12" y="12" width="4" height="4" fill="#f33"/><rect x="6" y="17" width="4" height="4" fill="#f33"/><rect x="12" y="19" width="4" height="4" fill="#f33"/><rect x="19" y="9" width="4" height="4" fill="#f33"/><rect x="22" y="25" width="4" height="4" fill="#f33"/></svg>
<svg class="a" style="left:1279px;top:294px" width="36" height="36" viewBox="0 0 36 36"><rect x="0.8999999999999999" y="0.8999999999999999" width="2.2" height="2.2" fill="#aaa"/><rect x="0.8999999999999999" y="26.9" width="2.2" height="2.2" fill="#aaa"/><rect x="7.4" y="0.8999999999999999" width="2.2" height="2.2" fill="#aaa"/><rect x="7.4" y="26.9" width="2.2" height="2.2" fill="#aaa"/><rect x="13.9" y="0.8999999999999999" width="2.2" height="2.2" fill="#aaa"/><rect x="13.9" y="26.9" width="2.2" height="2.2" fill="#aaa"/><rect x="20.4" y="0.8999999999999999" width="2.2" height="2.2" fill="#aaa"/><rect x="20.4" y="26.9" width="2.2" height="2.2" fill="#aaa"/><rect x="26.9" y="0.8999999999999999" width="2.2" height="2.2" fill="#aaa"/><rect x="26.9" y="26.9" width="2.2" height="2.2" fill="#aaa"/><rect x="0.8999999999999999" y="7.4" width="2.2" height="2.2" fill="#aaa"/><rect x="26.9" y="7.4" width="2.2" height="2.2" fill="#aaa"/><rect x="0.8999999999999999" y="13.9" width="2.2" height="2.2" fill="#aaa"/><rect x="26.9" y="13.9" width="2.2" height="2.2" fill="#aaa"/><rect x="0.8999999999999999" y="20.4" width="2.2" height="2.2" fill="#aaa"/><rect x="26.9" y="20.4" width="2.2" height="2.2" fill="#aaa"/><circle cx="9" cy="10" r="3.5" fill="#c8d8f0" stroke="#8aa0c0" stroke-width="1.5"/><circle cx="11" cy="22" r="2.5" fill="#c8d8f0" stroke="#8aa0c0" stroke-width="1.2"/><circle cx="18" cy="16" r="5" fill="#b0e0a0" stroke="#60a040" stroke-width="2"/><path transform="translate(18,17) scale(1.0)" d="M0,0 L0,14 L3.5,10.5 L6.5,16 L9,14.5 L6,9.5 L10.5,9 Z" fill="#6e6e58" stroke="#fff" stroke-width="0.6"/></svg>
<svg class="a" style="left:1332px;top:296px" width="36" height="36" viewBox="0 0 36 36"><path d="M1,24 L11,3 L21,24 Z" fill="#a6d68a" stroke="#80c070" stroke-width="1.5"/><path transform="translate(17,17) scale(1.1)" d="M0,0 L0,14 L3.5,10.5 L6.5,16 L9,14.5 L6,9.5 L10.5,9 Z" fill="#6e6e58" stroke="#fff" stroke-width="0.6"/></svg>
<svg class="a" style="left:1381px;top:296px" width="36" height="36" viewBox="0 0 36 36"><path d="M2,22 L11,3 L20,22 Z" fill="none" stroke="#b0d8a0" stroke-width="1" stroke-dasharray="2,2"/><rect x="9" y="1" width="4" height="4" fill="#f33"/><rect x="0" y="20" width="4" height="4" fill="#f33"/><rect x="18" y="20" width="4" height="4" fill="#f33"/><path transform="translate(17,17) scale(1.1)" d="M0,0 L0,14 L3.5,10.5 L6.5,16 L9,14.5 L6,9.5 L10.5,9 Z" fill="#6e6e58" stroke="#fff" stroke-width="0.6"/></svg>
<svg class="a" style="left:1431px;top:297px" width="36" height="36" viewBox="1 3 32 32"><circle cx="4" cy="18" r="2.5" fill="#f33"/><text x="10" y="26" font-family="Liberation Sans" font-weight="bold" font-size="31" fill="#707060">?</text></svg>
<svg class="a" style="left:1478px;top:295px" width="36" height="36" viewBox="0 0 36 36"><path d="M1,27 L9,13 L18,27 Z" fill="#a6d68a" stroke="#6a8a50" stroke-width="1.4"/><text x="13" y="26" font-family="Liberation Sans" font-size="34" fill="#707060">?</text></svg>
<div class="t" style="left:712px;top:299px;font-size:25px;transform:scaleX(0.99);transform-origin:0 0;color:#222;-webkit-text-stroke:0.3px #f0f0f0">3D</div>
<svg class="a" style="left:1572px;top:305px" width="11" height="11" viewBox="0 0 11 11"><path d="M2,2 L7,5.5 L2,9" fill="none" stroke="#555" stroke-width="1.6"/><path d="M7,2 L9,5.5 L7,9" fill="none" stroke="#999" stroke-width="1"/></svg>
<svg class="a" style="left:48px;top:287px" width="24" height="24" viewBox="0 0 24 24"><path d="M8,14 L18,4 M13,3 L19,3 L19,9" fill="none" stroke="#c8c8c8" stroke-width="3"/><path d="M2,9 L9,6 L14,9 L14,22 L7,24 L2,22 Z" fill="#ececec" stroke="#b8b8b8" stroke-width="1.5"/></svg>
<svg class="a" style="left:172px;top:288px" width="23" height="23" viewBox="0 0 23 23"><circle cx="11.5" cy="11.5" r="10" fill="#c4c4c4" stroke="#b4b4b4" stroke-width="1"/><path d="M7,15 L15,7 M9,9 a4,4 0 0 1 6,0" fill="none" stroke="#e0e0e0" stroke-width="2"/></svg>
<svg class="a" style="left:293px;top:289px" width="20" height="20" viewBox="0 0 20 20"><path d="M3,3 L17,17 M17,3 L3,17" stroke="#707060" stroke-width="6"/><path d="M3,3 L17,17 M17,3 L3,17" stroke="#f05030" stroke-width="4"/></svg>
<div class="t" style="left:446px;top:287px;font-size:26px;font-weight:bold;color:#2090e0">?</div>
<svg class="a" style="left:484px;top:330px" width="24" height="24" viewBox="0 0 24 24"><g transform="translate(12,12)"><path d="M-2.5,-11 H2.5 L3.2,-7.5 L6.5,-9 L9,-6.5 L7.5,-3.2 L11,-2.5 V2.5 L7.5,3.2 L9,6.5 L6.5,9 L3.2,7.5 L2.5,11 H-2.5 L-3.2,7.5 L-6.5,9 L-9,6.5 L-7.5,3.2 L-11,2.5 V-2.5 L-7.5,-3.2 L-9,-6.5 L-6.5,-9 L-3.2,-7.5 Z" fill="#f4f6f8" stroke="#8890a0" stroke-width="1.3"/><circle r="3" fill="none" stroke="#8890a0" stroke-width="1.3"/></g></svg>
<svg class="a" style="left:310px;top:577px" width="22" height="22" viewBox="0 0 22 22"><path d="M7,1 H15 L20,6 V17 H7 Z" fill="#f4f4f4" stroke="#111" stroke-width="1.5"/><path d="M1,5 H9 L14,10 V21 H1 Z" fill="#e8e8e8" stroke="#111" stroke-width="1.5"/></svg>
<svg class="a" style="left:362px;top:577px" width="22" height="22" viewBox="0 0 22 22"><rect x="1" y="3" width="15" height="17" rx="2" fill="#a8a8a8" stroke="#888" stroke-width="1.2"/><rect x="5" y="1" width="7" height="4" rx="1" fill="#c8c8c8" stroke="#888"/><path d="M10,10 H17 L21,14 V21 H10 Z" fill="#f0f0f0" stroke="#999" stroke-width="1.2"/></svg>
<svg class="a" style="left:414px;top:577px" width="22" height="22" viewBox="0 0 22 22"><path d="M4,11 A7,7 0 0 1 17,7" fill="none" stroke="#2080d0" stroke-width="4"/><path d="M18,11 A7,7 0 0 1 5,15" fill="none" stroke="#2080d0" stroke-width="4"/><path d="M14,2 L21,3 L19,10 Z M8,20 L1,19 L3,12 Z" fill="#2080d0"/></svg>
<svg class="a" style="left:466px;top:577px" width="22" height="22" viewBox="0 0 22 22"><rect x="1" y="1" width="20" height="20" rx="1.5" fill="#3c70c0"/><rect x="5" y="1" width="12" height="9" fill="#fff"/><rect x="6" y="13" width="10" height="8" fill="#d0d0d0"/><rect x="8" y="15" width="3" height="4" fill="#222"/></svg>
<div class="a" style="left:489px;top:565px;width:1px;height:48px;background:#f0f0f0"></div>
<svg class="a" style="left:31px;top:799px" width="15" height="10" viewBox="0 0 15 10"><path d="M1.5,1.5 L7.5,7.5 L13.5,1.5" fill="none" stroke="#444" stroke-width="2.6"/></svg>
<svg class="a" style="left:56px;top:794px" width="22" height="15" viewBox="0 0 22 15"><path d="M1,7.5 Q11,-2 21,7.5 Q11,17 1,7.5 Z" fill="#fff" stroke="#999" stroke-width="1.2"/><circle cx="11.5" cy="7" r="5" fill="#2a8ee0"/><circle cx="11.5" cy="7" r="2.6" fill="#111"/><circle cx="10" cy="5.5" r="1" fill="#fff"/></svg>
<svg class="a" style="left:83px;top:793px" width="22" height="27" viewBox="0 0 22 27"><path d="M1.5,1.5 H14 L20.5,8 V25.5 H1.5 Z" fill="#fff" stroke="#111" stroke-width="2"/><path d="M14,1.5 V8 H20.5" fill="none" stroke="#111" stroke-width="1.5"/><g transform="translate(4,10) scale(0.42)"><path d="M2,8 L20,4 L32,8 L32,26 L14,31 L2,26 Z" fill="none" stroke="#666" stroke-width="1.5"/><path d="M2,8 L14,12 L32,8 M14,12 V31" fill="none" stroke="#666" stroke-width="1.5"/><path d="M6.0,9.333333333333334 V27.666666666666668 M2,14.0 L14,18.333333333333332 L32,14.0 M20.0,10.666666666666666 V29.333333333333332 M8.0,6.666666666666667 L20.0,10.666666666666666  M6.0,9.333333333333334 L24.0,5.333333333333333" fill="none" stroke="#666" stroke-width="1.2"/><path d="M10.0,10.666666666666666 V29.333333333333332 M2,20.0 L14,24.666666666666664 L32,20.0 M26.0,9.333333333333334 V27.666666666666668 M14.0,5.333333333333334 L26.0,9.333333333333334  M10.0,10.666666666666666 L28.0,6.666666666666666" fill="none" stroke="#666" stroke-width="1.2"/></g></svg>
<svg class="a" style="left:88px;top:852px" width="19" height="15" viewBox="0 0 19 15"><path d="M1,4 Q9,-3 17,4" fill="none" stroke="#8a8a80" stroke-width="1.2"/><path d="M1,8 Q9,15 17,8 M4,10 L2,14 M9,12 V15 M14,10 L16,14" fill="none" stroke="#8a8a80" stroke-width="1.2"/></svg>
<svg class="a" style="left:114px;top:851px" width="23" height="23" viewBox="0 0 34 34"><path d="M2,8 L20,4 L32,8 L32,26 L14,31 L2,26 Z" fill="none" stroke="#ffffff" stroke-width="1.5"/><path d="M2,8 L14,12 L32,8 M14,12 V31" fill="none" stroke="#ffffff" stroke-width="1.5"/><path d="M6.0,9.333333333333334 V27.666666666666668 M2,14.0 L14,18.333333333333332 L32,14.0 M20.0,10.666666666666666 V29.333333333333332 M8.0,6.666666666666667 L20.0,10.666666666666666  M6.0,9.333333333333334 L24.0,5.333333333333333" fill="none" stroke="#ffffff" stroke-width="1.2"/><path d="M10.0,10.666666666666666 V29.333333333333332 M2,20.0 L14,24.666666666666664 L32,20.0 M26.0,9.333333333333334 V27.666666666666668 M14.0,5.333333333333334 L26.0,9.333333333333334  M10.0,10.666666666666666 L28.0,6.666666666666666" fill="none" stroke="#ffffff" stroke-width="1.2"/></svg>
<svg class="a" style="left:31px;top:915px" width="15" height="10" viewBox="0 0 15 10"><path d="M1.5,1.5 L7.5,7.5 L13.5,1.5" fill="none" stroke="#444" stroke-width="2.6"/></svg>
<svg class="a" style="left:56px;top:910px" width="22" height="15" viewBox="0 0 22 15"><path d="M1,7.5 Q11,-2 21,7.5 Q11,17 1,7.5 Z" fill="#fff" stroke="#999" stroke-width="1.2"/><circle cx="11.5" cy="7" r="5" fill="#2a8ee0"/><circle cx="11.5" cy="7" r="2.6" fill="#111"/><circle cx="10" cy="5.5" r="1" fill="#fff"/></svg>
<svg class="a" style="left:83px;top:909px" width="23" height="27" viewBox="0 0 23 27"><path d="M1.5,1.5 H14 L21,8.5 V25.5 H1.5 Z" fill="#fff" stroke="#111" stroke-width="2"/><path d="M14,1.5 V8.5 H21" fill="none" stroke="#111" stroke-width="1.5"/><circle cx="8" cy="15" r="4.5" fill="#222"/><rect x="10" y="9" width="7" height="7" fill="#222"/><path d="M7,23 L12,14 L17,23 Z" fill="#222" stroke="#fff" stroke-width="0.8"/></svg>
<svg class="a" style="left:64px;top:970px" width="11" height="15" viewBox="0 0 11 15"><path d="M2,1.5 L8.5,7.5 L2,13.5" fill="none" stroke="#999" stroke-width="2.4"/></svg>
<svg class="a" style="left:86px;top:968px" width="22" height="15" viewBox="0 0 22 15"><path d="M1,7.5 Q11,-2 21,7.5 Q11,17 1,7.5 Z" fill="#fff" stroke="#999" stroke-width="1.2"/><circle cx="11.5" cy="7" r="5" fill="#2a8ee0"/><circle cx="11.5" cy="7" r="2.6" fill="#111"/><circle cx="10" cy="5.5" r="1" fill="#fff"/></svg>
<svg class="a" style="left:113px;top:967px" width="24" height="24" viewBox="0 0 24 24"><circle cx="8" cy="10" r="7.5" fill="#222"/><rect x="11" y="1" width="12" height="12" fill="#222"/><path d="M4,23 L12,10 L20,23 Z" fill="#222" stroke="#f8f8f8" stroke-width="1"/></svg>
<svg class="a" style="left:0px;top:0px" width="1920" height="1080" viewBox="0 0 1920 1080">
<defs>
<filter id="nz" x="1060" y="450" width="350" height="540" filterUnits="userSpaceOnUse">
<feTurbulence type="fractalNoise" baseFrequency="0.45" numOctaves="1" seed="7" result="n"/>
<feColorMatrix in="n" type="matrix" values="0 0 0 0 1  0 0 0 0 1  0 0 0 0 0  0 0 0 -14 5.6" result="y"/>
<feComposite in="y" in2="SourceAlpha" operator="in"/>
</filter>
<filter id="nz2" x="1060" y="450" width="350" height="540" filterUnits="userSpaceOnUse">
<feTurbulence type="fractalNoise" baseFrequency="0.5" numOctaves="1" seed="2" result="n"/>
<feColorMatrix in="n" type="matrix" values="0 0 0 0 1  0 0 0 0 0.1  0 0 0 0 0  0 0 0 -14 5.4" result="y"/>
<feComposite in="y" in2="SourceAlpha" operator="in"/>
</filter>
<filter id="rough" x="1060" y="450" width="350" height="540" filterUnits="userSpaceOnUse">
<feTurbulence type="fractalNoise" baseFrequency="0.08" numOctaves="2" seed="4" result="t"/>
<feDisplacementMap in="SourceGraphic" in2="t" scale="6" xChannelSelector="R" yChannelSelector="G"/>
</filter>
<clipPath id="hc"><path d="M1285,532 L1310,542 L1332,558 L1350,585 L1360,612 L1372,656 L1377,714 L1375,761 L1378,790 L1377,808 L1360,818 L1354,845 L1353,870 L1356,910 L1362,930 L1377,945 L1377,950 L1288,932 L1220,948 L1158,941 L1134,934 L1125,920 L1124,901 L1127,874 L1121,860 L1118,844 L1125,816 L1129,776 L1137,758 L1135,723 L1123,700 L1120,690 L1120,674 L1128,661 L1131,631 L1137,613 L1155,581 L1168,567 L1178,559 L1210,546 L1250,535 Z"/></clipPath>
</defs>
<path d="M1068,460 L1285,481 L1375,471 L1375,489 L1396,492 L1397,905 L1377,909 L1377,950 L1288,932 L1077,983 Z" fill="#ff0000"/>
<path d="M960,571 L1069,564.5 L1069,575 L1005,574 Z" fill="#ff0000"/>
<path d="M1396,567 L1440,569 L1483,570.5 L1440,572 L1396,574 Z" fill="#ff0000"/>
<g clip-path="url(#hc)">
 <g filter="url(#rough)">
  <rect x="1100" y="520" width="300" height="440" fill="#d4ff18"/>
  <path d="M1285,532 L1310,542 L1332,558 L1350,585 L1360,612 L1372,656 L1377,714 L1375,761 L1378,790 L1377,808 L1360,818 L1354,845 L1353,870 L1356,910 L1362,930 L1377,945 L1377,950 L1288,932 L1220,948 L1158,941 L1134,934 L1125,920 L1124,901 L1127,874 L1121,860 L1118,844 L1125,816 L1129,776 L1137,758 L1135,723 L1123,700 L1120,690 L1120,674 L1128,661 L1131,631 L1137,613 L1155,581 L1168,567 L1178,559 L1210,546 L1250,535 Z" fill="none" stroke="#28ff00" stroke-width="22"/>
  <path d="M1285,532 L1310,542 L1332,558 L1350,585 L1360,612 L1372,656 L1377,714 L1375,761 L1378,790 L1377,808 L1360,818 L1354,845 L1353,870 L1356,910 L1362,930 L1377,945 L1377,950 L1288,932 L1220,948 L1158,941 L1134,934 L1125,920 L1124,901 L1127,874 L1121,860 L1118,844 L1125,816 L1129,776 L1137,758 L1135,723 L1123,700 L1120,690 L1120,674 L1128,661 L1131,631 L1137,613 L1155,581 L1168,567 L1178,559 L1210,546 L1250,535 Z" fill="none" stroke="#f0ff00" stroke-width="5"/>
  <path d="M1290,542 L1320,552 L1345,580 L1360,620 L1368,680 L1368,740" fill="none" stroke="#00e8a0" stroke-width="3" transform="translate(-2,0)"/>
  <path d="M1146,700 L1144,660 L1150,625 L1165,598 L1192,570 L1225,557 L1285,550 L1320,560 L1340,585 L1352,630 L1356,690 L1355,740 L1350,790" fill="none" stroke="#e8ff10" stroke-width="10"/><path d="M1146,700 L1144,660 L1150,625 L1165,598 L1192,570 L1225,557 L1285,550 L1320,560 L1340,585 L1352,630 L1356,690 L1355,740 L1350,790" fill="none" stroke="#30ff00" stroke-width="5" transform="translate(-9,-7)"/>
  <path d="M1146,700 L1144,660 L1150,625 L1165,598 L1192,570 L1225,557 L1285,550 L1320,560 L1340,585 L1352,630 L1356,690 L1355,740 L1350,790" fill="none" stroke="#ff2800" stroke-width="2.5" transform="translate(-4,-3)"/>
  <path d="M1200,552 L1178,559 L1168,567 L1155,581 L1137,613 L1131,631 L1128,661 L1120,674 L1120,690 L1123,700" fill="none" stroke="#00f0e8" stroke-width="5" transform="translate(9,1)"/>
  <!-- brain -->
  <path d="M1146,700 L1144,660 L1150,625 L1165,598 L1192,570 L1225,557 L1285,550 L1320,560 L1340,585 L1352,630 L1356,690 L1354,735 L1330,730 L1310,735 L1300,756 L1286,756 L1278,733 L1250,725 L1223,717 L1190,708 L1160,697 Z" fill="#12ee00"/>
  <path d="M1286,540 L1400,540 L1400,760 L1286,760 Z" fill="#b4f038" clip-path="url(#bc2)"/>
  <g clip-path="url(#bc2)" stroke="#d8ff20" stroke-width="4.5" fill="none" stroke-linecap="round" opacity="0.85">
   <path d="M1150,699 Q1160,700 1170,695 M1149,690 Q1161,693 1172,687 M1149,680 Q1160,684 1171,680 M1148,670 Q1154,671 1159,671 M1148,661 Q1160,665 1173,665 M1150,649 Q1163,649 1173,657 M1152,638 Q1161,639 1168,645 M1154,627 Q1161,632 1170,636 M1158,618 Q1164,619 1167,624 M1163,610 Q1166,617 1174,619 M1168,601 Q1178,606 1184,616 M1174,594 Q1185,600 1189,611 M1181,587 Q1190,593 1193,603 M1187,580 Q1187,587 1193,589 M1194,574 Q1199,578 1200,585 M1205,569 Q1206,583 1214,593 M1215,565 Q1213,574 1219,579 M1226,561 Q1226,570 1230,579 M1235,560 Q1232,567 1237,573 M1245,559 Q1241,569 1246,580 M1255,557 Q1256,570 1254,582 M1265,556 Q1267,565 1263,572 M1274,555 Q1277,562 1272,567 M1284,554 Q1281,561 1280,568 M1294,556 Q1292,562 1294,567 M1302,559 Q1304,567 1302,574 M1311,561 Q1310,573 1309,584 M1319,564 Q1318,571 1317,579 M1326,572 Q1328,584 1321,593 M1332,580 Q1333,594 1324,605 M1338,589 Q1331,597 1330,609 M1341,598 Q1336,601 1336,607 M1343,606 Q1338,613 1335,620 M1345,615 Q1346,622 1339,624 M1347,624 Q1339,626 1339,634 M1349,633 Q1343,635 1340,642 M1349,642 Q1337,646 1330,657 M1350,652 Q1344,657 1336,660 M1350,661 Q1341,662 1333,668 M1351,671 Q1345,669 1339,673 M1351,680 Q1340,676 1329,680 M1352,689 Q1348,684 1342,687 M1352,698 Q1346,697 1341,694 M1352,706 Q1345,698 1334,697 M1351,715 Q1347,707 1339,706 M1351,723 Q1343,719 1337,711 "/>
   <path d="M1195,700 Q1215,690 1225,700 M1230,710 L1250,690 M1255,715 L1262,695 M1270,720 L1275,705 M1300,640 Q1320,650 1330,670 M1305,700 Q1320,690 1335,705" />
  </g>
  <path d="M1146,700 L1144,660 L1150,625 L1165,598 L1192,570 L1225,557 L1285,550 L1320,560 L1340,585 L1352,630 L1356,690 L1354,735 L1330,730 L1310,735 L1300,756 L1286,756 L1278,733 L1250,725 L1223,717 L1190,708 L1160,697 Z" fill="none" stroke="#ffee00" stroke-width="5" clip-path="url(#bc2)"/>
  <!-- face -->
  <path d="M1135,700 L1206,722 L1212,760 L1180,770 L1150,765 L1130,730 Z" fill="#40ff00"/><path d="M1140,703 L1206,728 L1210,750 L1185,748 L1165,725 L1145,722 Z" fill="#00f0f0"/><path d="M1175,735 L1205,745 L1200,765 L1178,760 Z" fill="#00e8e0"/>
  <path d="M1128,770 L1150,760 L1160,800 L1150,860 L1130,850 Z" fill="#38ff00"/>
  <path d="M1135,790 L1145,780 L1150,840 L1138,830 Z" fill="#00e8e8"/>
  <circle cx="1157" cy="736" r="13" fill="#30ff00"/>
  <circle cx="1157" cy="736" r="9.5" fill="#ff6010" stroke="#f0ff00" stroke-width="2"/>
  <path d="M1162,773 L1198,748 L1205,757 L1205,820 L1162,820 Z" fill="#ff0000"/>
  <path d="M1152,825 L1205,822 L1202,870 L1185,915 L1160,922 L1150,880 Z" fill="#ff1000"/><path d="M1158,830 L1164,830 L1166,880 L1160,882 Z M1172,826 L1176,828 L1178,870 L1172,866 Z M1186,830 L1190,832 L1188,860 L1184,858 Z" fill="#f0ff00"/><path d="M1200,870 L1215,870 L1195,930 L1185,925 Z" fill="#c0ff00"/>
  <path d="M1212,745 L1260,733 L1286,756 L1290,800 L1270,840 L1240,850 L1215,800 Z" fill="#a8ff10"/>
  <path d="M1230,780 L1245,775 L1255,850 L1240,860 Z" fill="#00e8f0" opacity="0.8"/>
  <path d="M1290,760 L1312,735 L1340,730 L1352,750 L1350,795 L1325,800 Z" fill="#ff0000"/>
  <path d="M1280,770 L1312,750 L1310,790 L1290,795 Z" fill="#ff9000" opacity="0.7"/>
  <path d="M1235,778 L1340,812" stroke="#ff2000" stroke-width="2.5"/>
  <path d="M1215,870 L1286,830 L1290,932 L1220,948 L1190,940 Z" fill="#f0ff00"/><path d="M1150,930 L1200,870 L1230,900 L1215,948 Z" fill="#c8ff10"/>
  <path d="M1286,830 L1330,815 L1352,850 L1356,910 L1377,950 L1290,932 Z" fill="#f8f000"/>
  <path d="M1280,880 L1300,870 L1330,940 L1290,932 Z" fill="#ffa000" opacity="0.55"/><path d="M1330,905 L1350,910 L1372,948 L1335,942 Z" fill="#ffb000"/><path d="M1240,900 L1255,890 L1262,940 L1245,944 Z" fill="#ffc000" opacity="0.45"/>
  <path d="M1330,820 L1345,825 L1348,900 L1335,905 Z" fill="#40f000"/>
  <path d="M1358,800 L1378,790 L1376,840 L1360,850 Z" fill="#20e8a0"/>
 </g>
 <rect x="1100" y="690" width="300" height="270" fill="#ffff00" filter="url(#nz)" opacity="0.45"/>
 <rect x="1100" y="700" width="300" height="260" fill="#ff2000" filter="url(#nz2)" opacity="0.25"/>
</g>
<clipPath id="bc2"><path d="M1146,700 L1144,660 L1150,625 L1165,598 L1192,570 L1225,557 L1285,550 L1320,560 L1340,585 L1352,630 L1356,690 L1354,735 L1330,730 L1310,735 L1300,756 L1286,756 L1278,733 L1250,725 L1223,717 L1190,708 L1160,697 Z"/></clipPath>
<!-- horizontal plane crossing -->
<path d="M1069,563 L1396,566.5 L1396,570.5 L1069,567 Z" fill="#ff0000"/>
</svg>
<svg class="a" style="left:596px;top:960px" width="84" height="84" viewBox="0 0 84 84">
<path d="M40,23.5 L12,22.5" stroke="#00d000" stroke-width="1.3"/>
<path d="M40,23.5 L64,22.5" stroke="#e00000" stroke-width="1.3"/>
<path d="M40,23.5 L40,65" stroke="#e0e000" stroke-width="1.2"/>
<path d="M6,23 L13,19 L14,27 Z" fill="#00a000"/><circle cx="11" cy="23" r="3.6" fill="#00b000"/>
<path d="M70,23 L62,19 L62,27 Z" fill="#900000"/><circle cx="64" cy="23" r="3.6" fill="#c00000"/>
<path d="M36.5,65 L43.5,65 L40,76 Z" fill="#e0e000"/><rect x="36.5" y="64" width="7" height="2" fill="#404000"/>
<text x="14" y="23" fill="#fff" font-size="12" font-family="Liberation Sans">Z</text>
<text x="67" y="24" fill="#fff" font-size="13" font-family="Liberation Sans">X</text>
<text x="41" y="66" fill="#fff" font-size="14" font-family="Liberation Sans">Y</text>
</svg>
<div class="a" style="left:1841px;top:761.0px;width:31px;height:16.5px;background:#ffffff"></div>
<div class="a" style="left:1841px;top:781.5px;width:31px;height:16.5px;background:#ff0000"></div>
<div class="a" style="left:1841px;top:802.0px;width:31px;height:16.5px;background:#00ff00"></div>
<div class="a" style="left:1841px;top:822.5px;width:31px;height:16.5px;background:#0000ff"></div>
<div class="a" style="left:1841px;top:843.0px;width:31px;height:16.5px;background:#ffff00"></div>
<div class="a" style="left:1841px;top:863.5px;width:31px;height:16.5px;background:#ff00ff"></div>
<div class="a" style="left:1841px;top:884.0px;width:31px;height:16.5px;background:#00ffff"></div>
<div class="a" style="left:1841px;top:904.5px;width:31px;height:16.5px;background:#a3a3ff"></div>
<div class="a" style="left:1841px;top:925.0px;width:31px;height:16.5px;background:#a67f57"></div>
<div class="a" style="left:1841px;top:945.5px;width:31px;height:16.5px;background:#ff80c0"></div>
<div class="a" style="left:1841px;top:966.0px;width:31px;height:16.5px;background:#8757b3"></div>
<div class="a" style="left:1841px;top:986.5px;width:31px;height:16.5px;background:#ffbf7f"></div>
<svg class="a" style="left:0px;top:0px" width="1920" height="1080" viewBox="0 0 1920 1080"><text x="1833" y="713.0" fill="#fff" font-size="31" text-anchor="end" font-family="Liberation Sans">0</text><text x="1833" y="744.8" fill="#fff" font-size="31" text-anchor="end" font-family="Liberation Sans">1</text><text x="1833" y="776.6" fill="#fff" font-size="31" text-anchor="end" font-family="Liberation Sans">2</text><text x="1833" y="808.4" fill="#fff" font-size="31" text-anchor="end" font-family="Liberation Sans">3</text><text x="1833" y="840.2" fill="#fff" font-size="31" text-anchor="end" font-family="Liberation Sans">4</text><text x="1833" y="872.0" fill="#fff" font-size="31" text-anchor="end" font-family="Liberation Sans">5</text><text x="1833" y="903.8" fill="#fff" font-size="31" text-anchor="end" font-family="Liberation Sans">6</text><text x="1833" y="935.6" fill="#fff" font-size="31" text-anchor="end" font-family="Liberation Sans">7</text><text x="1833" y="967.4" fill="#fff" font-size="31" text-anchor="end" font-family="Liberation Sans">8</text><text x="1833" y="999.2" fill="#fff" font-size="31" text-anchor="end" font-family="Liberation Sans">9</text><text x="1833" y="1031.0" fill="#fff" font-size="31" text-anchor="end" font-family="Liberation Sans">10</text><text x="1833" y="1062.8" fill="#fff" font-size="31" text-anchor="end" font-family="Liberation Sans">11</text><path d="M1834,703.0 L1841,769.0" stroke="#fff" stroke-width="1"/><path d="M1834,734.8 L1841,789.5" stroke="#fff" stroke-width="1"/><path d="M1834,766.6 L1841,810.0" stroke="#fff" stroke-width="1"/><path d="M1834,798.4 L1841,830.5" stroke="#fff" stroke-width="1"/><path d="M1834,830.2 L1841,851.0" stroke="#fff" stroke-width="1"/><path d="M1834,862.0 L1841,871.5" stroke="#fff" stroke-width="1"/><path d="M1834,893.8 L1841,892.0" stroke="#fff" stroke-width="1"/><path d="M1834,925.6 L1841,912.5" stroke="#fff" stroke-width="1"/><path d="M1834,957.4 L1841,933.0" stroke="#fff" stroke-width="1"/><path d="M1834,989.2 L1841,953.5" stroke="#fff" stroke-width="1"/><path d="M1834,1021.0 L1841,974.0" stroke="#fff" stroke-width="1"/><path d="M1834,1052.8 L1841,994.5" stroke="#fff" stroke-width="1"/></svg>
<div class="t" style="left:1878px;top:990px;font-size:33px;color:#fff;transform:rotate(-90deg);transform-origin:0 0;letter-spacing:0.5px">vtkBlockColors</div>
</body></html>
